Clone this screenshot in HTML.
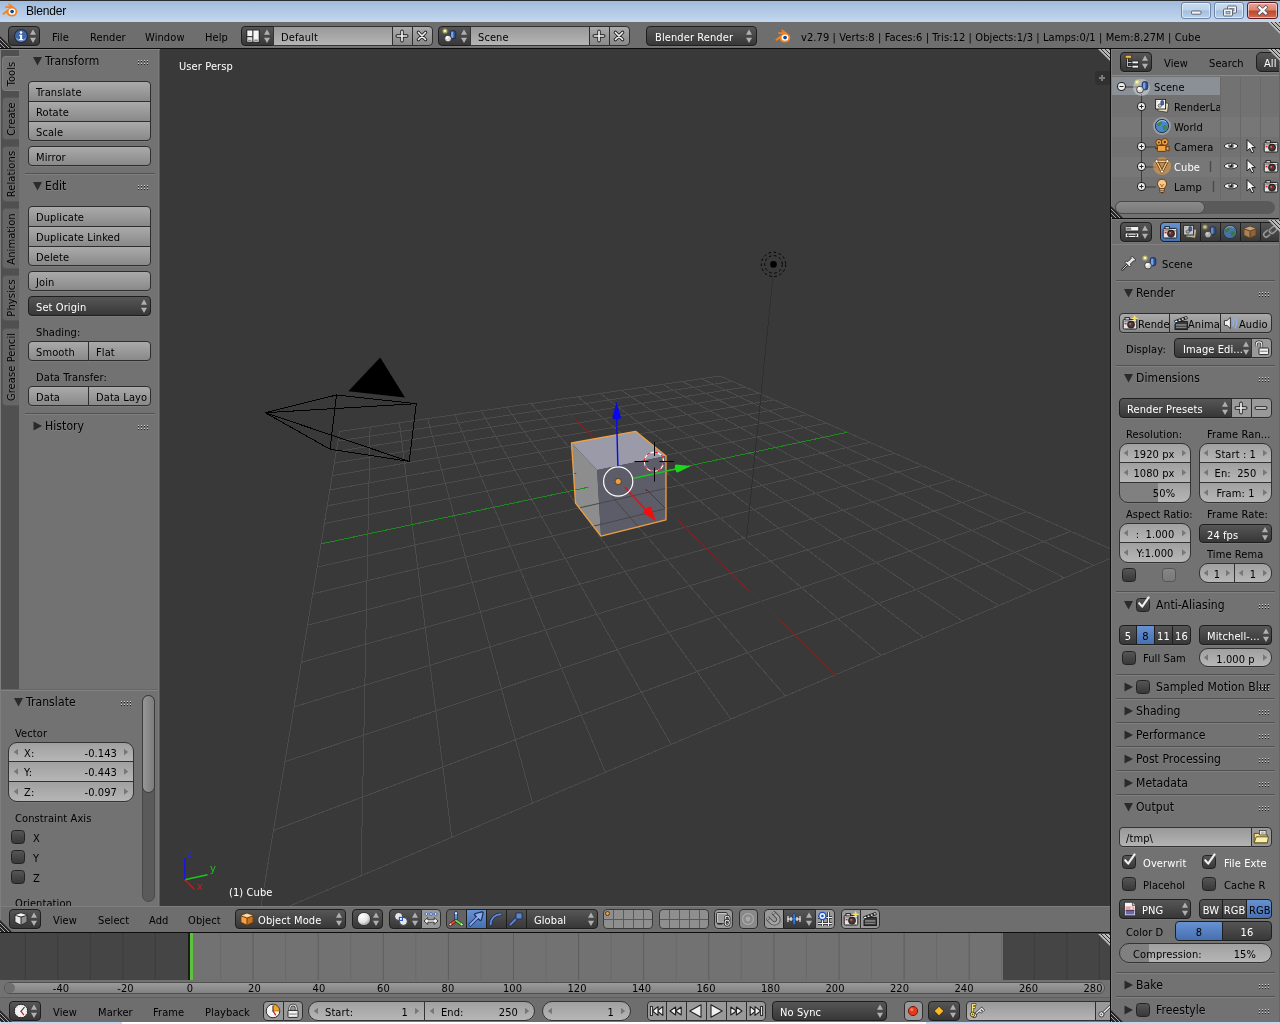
<!DOCTYPE html>
<html><head><meta charset="utf-8"><title>Blender</title>
<style>
html,body{margin:0;padding:0;}
body{width:1280px;height:1024px;overflow:hidden;position:relative;background:#727272;font-family:"DejaVu Sans Condensed","DejaVu Sans","Liberation Sans",sans-serif;font-size:11px;font-stretch:condensed;letter-spacing:0.1px;color:#000;}
div,span,svg{position:absolute;box-sizing:border-box;}
.t{white-space:nowrap;line-height:14px;height:14px;}
.w{overflow:hidden;white-space:nowrap;}
.w>span{top:1px;bottom:-1px;}
.btn{background:linear-gradient(#aaaaaa,#898989);border:1px solid #2e2e2e;color:#000;}
.btn,.menu,.num,.txt,.tog,.togs,.radio,.radios{box-shadow:0 1px 0 rgba(255,255,255,0.07);}
.menu{background:linear-gradient(#565656,#373737);border:1px solid #1e1e1e;color:#fff;}
.num{background:linear-gradient(#a0a0a0,#b6b6b6);border:1px solid #333;color:#000;}
.txt{background:linear-gradient(#999999,#b4b4b4);border:1px solid #333;color:#000;}
.tog{background:#999999;border:1px solid #2e2e2e;color:#000;}
.togs{background:#646464;border:1px solid #2e2e2e;color:#fff;}
.radio{background:linear-gradient(#555555,#383838);border:1px solid #1e1e1e;color:#fff;}
.radios{background:linear-gradient(#6691d3,#4770b1);border:1px solid #1e1e1e;color:#000;}
.chk{background:linear-gradient(#555555,#383838);border:1px solid #222;border-radius:3.5px;width:14px;height:14px;}
.chkd{background:linear-gradient(#868686,#797979);border:1px solid #555;border-radius:3.5px;width:14px;height:14px;}
.sep{height:1px;background:#5c5c5c;border-bottom:0;}
.hdr{background:#6e6e6e;}
.ph{font-size:11px;}
.sh{text-shadow:0 1px 0 rgba(255,255,255,0.12);}
</style></head>
<body>
<div id="root" style="left:0;top:0;width:1280px;height:1024px;will-change:transform;">
<div class="" style="left:0px;top:49px;width:160px;height:857px;background:#727272;"></div>
<div class="" style="left:0px;top:49px;width:19px;height:641px;background:#505050;"></div>
<div class="" style="left:0px;top:49px;width:1px;height:857px;background:#7e7e7e;z-index:3;"></div>
<div class="" style="left:158px;top:49px;width:1px;height:857px;background:#7a7a7a;"></div>
<div class="" style="left:159px;top:49px;width:1px;height:857px;background:#5a5a5a;"></div>
<div class="" style="left:0px;top:49px;width:160px;height:1px;background:#858585;"></div>
<div class="" style="left:2px;top:56px;width:18px;height:35px;background:#727272;border:1px solid #7f7f7f;border-right:0;border-radius:4px 0 0 4px;"></div>
<div class="t sh" style="left:-38px;top:66.5px;width:100px;text-align:center;transform:rotate(-90deg);">Tools</div>
<div class="" style="left:2px;top:97px;width:17px;height:43px;background:#666666;border:1px solid #585858;border-right:0;border-radius:4px 0 0 4px;"></div>
<div class="t sh" style="left:-38px;top:111.5px;width:100px;text-align:center;transform:rotate(-90deg);">Create</div>
<div class="" style="left:2px;top:146px;width:17px;height:56px;background:#666666;border:1px solid #585858;border-right:0;border-radius:4px 0 0 4px;"></div>
<div class="t sh" style="left:-38px;top:167.0px;width:100px;text-align:center;transform:rotate(-90deg);">Relations</div>
<div class="" style="left:2px;top:208px;width:17px;height:61px;background:#666666;border:1px solid #585858;border-right:0;border-radius:4px 0 0 4px;"></div>
<div class="t sh" style="left:-38px;top:231.5px;width:100px;text-align:center;transform:rotate(-90deg);">Animation</div>
<div class="" style="left:2px;top:275px;width:17px;height:46px;background:#666666;border:1px solid #585858;border-right:0;border-radius:4px 0 0 4px;"></div>
<div class="t sh" style="left:-38px;top:291.0px;width:100px;text-align:center;transform:rotate(-90deg);">Physics</div>
<div class="" style="left:2px;top:328px;width:17px;height:78px;background:#666666;border:1px solid #585858;border-right:0;border-radius:4px 0 0 4px;"></div>
<div class="t sh" style="left:-38px;top:360.0px;width:100px;text-align:center;transform:rotate(-90deg);">Grease Pencil</div>
<svg style="left:33px;top:56px" width="10" height="10" viewBox="0 0 10 10"><polygon points="0,1 9,1 4.5,9.5" fill="#2a2a2a"/></svg>
<div class="t sh" style="font-size:12px;left:45px;top:54px;">Transform</div>
<svg style="left:138px;top:60px" width="12" height="6" viewBox="0 0 12 6" shape-rendering="crispEdges"><rect x="0" y="0" width="1" height="1" fill="#d2d2d2"/><rect x="0" y="1" width="1" height="1" fill="#222222"/><rect x="0" y="3" width="1" height="1" fill="#d2d2d2"/><rect x="0" y="4" width="1" height="1" fill="#222222"/><rect x="3" y="0" width="1" height="1" fill="#d2d2d2"/><rect x="3" y="1" width="1" height="1" fill="#222222"/><rect x="3" y="3" width="1" height="1" fill="#d2d2d2"/><rect x="3" y="4" width="1" height="1" fill="#222222"/><rect x="6" y="0" width="1" height="1" fill="#d2d2d2"/><rect x="6" y="1" width="1" height="1" fill="#222222"/><rect x="6" y="3" width="1" height="1" fill="#d2d2d2"/><rect x="6" y="4" width="1" height="1" fill="#222222"/><rect x="9" y="0" width="1" height="1" fill="#d2d2d2"/><rect x="9" y="1" width="1" height="1" fill="#222222"/><rect x="9" y="3" width="1" height="1" fill="#d2d2d2"/><rect x="9" y="4" width="1" height="1" fill="#222222"/></svg>
<div class="w btn" style="left:28px;top:81px;width:123px;height:21px;border-radius:4px 4px 0px 0px;line-height:19px;"><span style="left:7px;">Translate</span></div>
<div class="w btn" style="left:28px;top:101px;width:123px;height:21px;border-radius:0px 0px 0px 0px;line-height:19px;"><span style="left:7px;">Rotate</span></div>
<div class="w btn" style="left:28px;top:121px;width:123px;height:20px;border-radius:0px 0px 4px 4px;line-height:19px;"><span style="left:7px;">Scale</span></div>
<div class="w btn" style="left:28px;top:146px;width:123px;height:20px;border-radius:4px 4px 4px 4px;line-height:19px;"><span style="left:7px;">Mirror</span></div>
<div class="" style="left:25px;top:173px;width:130px;height:1px;background:#525252;"></div>
<div class="" style="left:25px;top:174px;width:130px;height:1px;background:#818181;"></div>
<svg style="left:33px;top:181px" width="10" height="10" viewBox="0 0 10 10"><polygon points="0,1 9,1 4.5,9.5" fill="#2a2a2a"/></svg>
<div class="t sh" style="font-size:12px;left:45px;top:179px;">Edit</div>
<svg style="left:138px;top:185px" width="12" height="6" viewBox="0 0 12 6" shape-rendering="crispEdges"><rect x="0" y="0" width="1" height="1" fill="#d2d2d2"/><rect x="0" y="1" width="1" height="1" fill="#222222"/><rect x="0" y="3" width="1" height="1" fill="#d2d2d2"/><rect x="0" y="4" width="1" height="1" fill="#222222"/><rect x="3" y="0" width="1" height="1" fill="#d2d2d2"/><rect x="3" y="1" width="1" height="1" fill="#222222"/><rect x="3" y="3" width="1" height="1" fill="#d2d2d2"/><rect x="3" y="4" width="1" height="1" fill="#222222"/><rect x="6" y="0" width="1" height="1" fill="#d2d2d2"/><rect x="6" y="1" width="1" height="1" fill="#222222"/><rect x="6" y="3" width="1" height="1" fill="#d2d2d2"/><rect x="6" y="4" width="1" height="1" fill="#222222"/><rect x="9" y="0" width="1" height="1" fill="#d2d2d2"/><rect x="9" y="1" width="1" height="1" fill="#222222"/><rect x="9" y="3" width="1" height="1" fill="#d2d2d2"/><rect x="9" y="4" width="1" height="1" fill="#222222"/></svg>
<div class="w btn" style="left:28px;top:206px;width:123px;height:21px;border-radius:4px 4px 0px 0px;line-height:19px;"><span style="left:7px;">Duplicate</span></div>
<div class="w btn" style="left:28px;top:226px;width:123px;height:21px;border-radius:0px 0px 0px 0px;line-height:19px;"><span style="left:7px;">Duplicate Linked</span></div>
<div class="w btn" style="left:28px;top:246px;width:123px;height:20px;border-radius:0px 0px 4px 4px;line-height:19px;"><span style="left:7px;">Delete</span></div>
<div class="w btn" style="left:28px;top:271px;width:123px;height:20px;border-radius:4px 4px 4px 4px;line-height:19px;"><span style="left:7px;">Join</span></div>
<div class="w menu" style="left:28px;top:296px;width:123px;height:20px;border-radius:4px 4px 4px 4px;line-height:19px;"><span style="left:7px;">Set Origin</span><svg style="left:0;top:0" width="123" height="20" viewBox="0 0 123 20"><polygon points="112,7.8 118,7.8 115,2.5999999999999996" fill="#b0b0b0"/><polygon points="112,10.8 118,10.8 115,16.0" fill="#b0b0b0"/></svg></div>
<div class="t " style="left:36px;top:326px;">Shading:</div>
<div class="w btn" style="left:28px;top:341px;width:61px;height:20px;border-radius:4px 0px 0px 4px;line-height:19px;"><span style="left:7px;">Smooth</span></div>
<div class="w btn" style="left:88px;top:341px;width:63px;height:20px;border-radius:0px 4px 4px 0px;line-height:19px;"><span style="left:7px;">Flat</span></div>
<div class="t " style="left:36px;top:371px;">Data Transfer:</div>
<div class="w btn" style="left:28px;top:386px;width:61px;height:20px;border-radius:4px 0px 0px 4px;line-height:19px;"><span style="left:7px;">Data</span></div>
<div class="w btn" style="left:88px;top:386px;width:63px;height:20px;border-radius:0px 4px 4px 0px;line-height:19px;"><span style="left:7px;">Data Layo</span></div>
<div class="" style="left:25px;top:413px;width:130px;height:1px;background:#525252;"></div>
<div class="" style="left:25px;top:414px;width:130px;height:1px;background:#818181;"></div>
<svg style="left:33px;top:421px" width="10" height="10" viewBox="0 0 10 10"><polygon points="0.5,0.5 0.5,9.5 9,5" fill="#2a2a2a"/></svg>
<div class="t sh" style="font-size:12px;left:45px;top:419px;">History</div>
<svg style="left:138px;top:425px" width="12" height="6" viewBox="0 0 12 6" shape-rendering="crispEdges"><rect x="0" y="0" width="1" height="1" fill="#d2d2d2"/><rect x="0" y="1" width="1" height="1" fill="#222222"/><rect x="0" y="3" width="1" height="1" fill="#d2d2d2"/><rect x="0" y="4" width="1" height="1" fill="#222222"/><rect x="3" y="0" width="1" height="1" fill="#d2d2d2"/><rect x="3" y="1" width="1" height="1" fill="#222222"/><rect x="3" y="3" width="1" height="1" fill="#d2d2d2"/><rect x="3" y="4" width="1" height="1" fill="#222222"/><rect x="6" y="0" width="1" height="1" fill="#d2d2d2"/><rect x="6" y="1" width="1" height="1" fill="#222222"/><rect x="6" y="3" width="1" height="1" fill="#d2d2d2"/><rect x="6" y="4" width="1" height="1" fill="#222222"/><rect x="9" y="0" width="1" height="1" fill="#d2d2d2"/><rect x="9" y="1" width="1" height="1" fill="#222222"/><rect x="9" y="3" width="1" height="1" fill="#d2d2d2"/><rect x="9" y="4" width="1" height="1" fill="#222222"/></svg>
<div class="" style="left:0px;top:689px;width:158px;height:217px;background:#727272;"></div>
<div class="" style="left:0px;top:689px;width:158px;height:1px;background:#666666;"></div>
<div class="" style="left:0px;top:690px;width:158px;height:1px;background:#828282;"></div>
<svg style="left:14px;top:697px" width="10" height="10" viewBox="0 0 10 10"><polygon points="0,1 9,1 4.5,9.5" fill="#2a2a2a"/></svg>
<div class="t sh" style="font-size:12px;left:26px;top:695px;">Translate</div>
<svg style="left:121px;top:701px" width="12" height="6" viewBox="0 0 12 6" shape-rendering="crispEdges"><rect x="0" y="0" width="1" height="1" fill="#d2d2d2"/><rect x="0" y="1" width="1" height="1" fill="#222222"/><rect x="0" y="3" width="1" height="1" fill="#d2d2d2"/><rect x="0" y="4" width="1" height="1" fill="#222222"/><rect x="3" y="0" width="1" height="1" fill="#d2d2d2"/><rect x="3" y="1" width="1" height="1" fill="#222222"/><rect x="3" y="3" width="1" height="1" fill="#d2d2d2"/><rect x="3" y="4" width="1" height="1" fill="#222222"/><rect x="6" y="0" width="1" height="1" fill="#d2d2d2"/><rect x="6" y="1" width="1" height="1" fill="#222222"/><rect x="6" y="3" width="1" height="1" fill="#d2d2d2"/><rect x="6" y="4" width="1" height="1" fill="#222222"/><rect x="9" y="0" width="1" height="1" fill="#d2d2d2"/><rect x="9" y="1" width="1" height="1" fill="#222222"/><rect x="9" y="3" width="1" height="1" fill="#d2d2d2"/><rect x="9" y="4" width="1" height="1" fill="#222222"/></svg>
<div class="t " style="left:15px;top:727px;">Vector</div>
<div class="w num" style="left:8px;top:742px;width:126px;height:20px;border-radius:9px 9px 0px 0px;line-height:19px;"><span style="left:15px;">X:</span><svg style="left:0;top:0" width="126" height="20" viewBox="0 0 126 20"><polygon points="9,5.7 9,12.3 4.8,9.0" fill="#777777"/><polygon points="115,5.7 115,12.3 119.2,9.0" fill="#777777"/></svg><span style="right:16px">-0.143</span></div>
<div class="w num" style="left:8px;top:761px;width:126px;height:21px;border-radius:0px 0px 0px 0px;line-height:19px;"><span style="left:15px;">Y:</span><svg style="left:0;top:0" width="126" height="21" viewBox="0 0 126 21"><polygon points="9,6.2 9,12.8 4.8,9.5" fill="#777777"/><polygon points="115,6.2 115,12.8 119.2,9.5" fill="#777777"/></svg><span style="right:16px">-0.443</span></div>
<div class="w num" style="left:8px;top:781px;width:126px;height:21px;border-radius:0px 0px 9px 9px;line-height:19px;"><span style="left:15px;">Z:</span><svg style="left:0;top:0" width="126" height="21" viewBox="0 0 126 21"><polygon points="9,6.2 9,12.8 4.8,9.5" fill="#777777"/><polygon points="115,6.2 115,12.8 119.2,9.5" fill="#777777"/></svg><span style="right:16px">-0.097</span></div>
<div class="t " style="left:15px;top:812px;">Constraint Axis</div>
<div class="chk" style="left:11px;top:830px;overflow:visible"></div>
<div class="t " style="left:33px;top:832px;">X</div>
<div class="chk" style="left:11px;top:850px;overflow:visible"></div>
<div class="t " style="left:33px;top:852px;">Y</div>
<div class="chk" style="left:11px;top:870px;overflow:visible"></div>
<div class="t " style="left:33px;top:872px;">Z</div>
<div class="t " style="left:15px;top:897px;">Orientation</div>
<div class="" style="left:142px;top:695px;width:13px;height:207px;background:#5a5a5a;border:1px solid #484848;border-radius:6.5px;"></div>
<div class="" style="left:142px;top:695px;width:13px;height:98px;background:linear-gradient(90deg,#969696,#7c7c7c);border:1px solid #3c3c3c;border-radius:6.5px;"></div>
<div class="" style="left:160px;top:49px;width:950px;height:857px;background:#393939;"></div>
<svg style="left:160px;top:49px" width="950" height="857" viewBox="160 49 950 857"><path d="M339.6 431.5L720.1 376.0M339.6 431.5L258.8 919.1M338.0 441.0L732.1 381.4M370.1 427.0L361.0 875.9M336.3 451.5L745.0 387.1M399.4 422.7L451.7 837.4M334.4 463.0L758.9 393.2M427.6 418.6L532.7 803.1M332.3 475.7L773.8 399.8M454.9 414.7L605.4 772.3M329.9 489.9L789.9 406.9M481.2 410.8L671.2 744.4M327.3 505.8L807.4 414.7M506.7 407.1L731.0 719.1M324.3 523.6L826.4 423.1M531.2 403.5L785.4 696.0M317.1 567.1L869.8 442.3M578.0 396.7L881.2 655.5M312.7 593.9L894.9 453.4M600.2 393.5L923.5 637.5M307.5 625.2L922.6 465.7M621.8 390.4L962.6 621.0M301.4 662.3L953.4 479.3M642.7 387.3L998.9 605.6M294.0 706.9L987.9 494.6M662.9 384.4L1032.7 591.3M284.9 761.7L1026.7 511.8M682.6 381.5L1064.3 577.9M273.5 830.4L1070.8 531.4M701.6 378.7L1093.7 565.4M258.8 919.1L1121.3 553.7M720.1 376.0L1121.3 553.7" stroke="#4b4b4b" stroke-width="1" fill="none" shape-rendering="crispEdges"/><path d="M555.0 400.1L835.3 674.9" stroke="#7a2323" stroke-width="1" shape-rendering="crispEdges"/><path d="M321.0 543.9L847.1 432.3" stroke="#1f8a1f" stroke-width="1" shape-rendering="crispEdges"/><path d="M773 276L746.5 539" stroke="#2f2f2f" stroke-width="1" shape-rendering="crispEdges"/><circle cx="773.5" cy="264.4" r="3.3" fill="#000"/><circle cx="773.5" cy="264.4" r="8.8" fill="none" stroke="#000" stroke-width="1" stroke-dasharray="2.6 2.6"/><circle cx="773.5" cy="264.4" r="12.2" fill="none" stroke="#000" stroke-width="1" stroke-dasharray="2.6 2.6"/><path d="M265.2 412.7L336.5 395L416.3 403.7L409.2 461.4L330 449.2Z M336.5 395L330 449.2 M265.2 412.7L416.3 403.7 M265.2 412.7L409.2 461.4 M265.2 412.7L330 449.2" stroke="#000" stroke-width="1" fill="none" stroke-linejoin="round" shape-rendering="crispEdges"/><path d="M380.2 357.4L348.3 391.3L405 397.4Z" fill="#000"/><polygon points="571.5,443 635.6,431.3 666,456 597.1,470" fill="#9a9aa8"/><polygon points="571.5,443 597.1,470 601,536.1 575.5,503" fill="#8d8d8d"/><polygon points="597.1,470 666,456 666,519.8 601,536.1" fill="#5d5d69"/><clipPath id="cubelow"><polygon points="573.3,470 598.9,499.7 666,484.7 666,519.8 601,536.1 575.5,503"/></clipPath><g clip-path="url(#cubelow)"><path d="M339.6 431.5L720.1 376.0M339.6 431.5L258.8 919.1M338.0 441.0L732.1 381.4M370.1 427.0L361.0 875.9M336.3 451.5L745.0 387.1M399.4 422.7L451.7 837.4M334.4 463.0L758.9 393.2M427.6 418.6L532.7 803.1M332.3 475.7L773.8 399.8M454.9 414.7L605.4 772.3M329.9 489.9L789.9 406.9M481.2 410.8L671.2 744.4M327.3 505.8L807.4 414.7M506.7 407.1L731.0 719.1M324.3 523.6L826.4 423.1M531.2 403.5L785.4 696.0M317.1 567.1L869.8 442.3M578.0 396.7L881.2 655.5M312.7 593.9L894.9 453.4M600.2 393.5L923.5 637.5M307.5 625.2L922.6 465.7M621.8 390.4L962.6 621.0M301.4 662.3L953.4 479.3M642.7 387.3L998.9 605.6M294.0 706.9L987.9 494.6M662.9 384.4L1032.7 591.3M284.9 761.7L1026.7 511.8M682.6 381.5L1064.3 577.9M273.5 830.4L1070.8 531.4M701.6 378.7L1093.7 565.4M258.8 919.1L1121.3 553.7M720.1 376.0L1121.3 553.7" stroke="#474749" stroke-width="1" fill="none"/><path d="M555.0 400.1L835.3 674.9" stroke="#7a2323" stroke-width="1" shape-rendering="crispEdges"/><path d="M321.0 543.9L847.1 432.3" stroke="#1f8a1f" stroke-width="1" shape-rendering="crispEdges"/></g><polygon points="571.5,443 635.6,431.3 666,456 666,519.8 601,536.1 575.5,503" fill="none" stroke="#f0a040" stroke-width="1.3" stroke-linejoin="round"/><path d="M617.9 467L616.6 418" stroke="#0a0aee" stroke-width="1.4"/><path d="M616.5 401.5C618.3 408 619.6 413 621 417.5C621.4 420 612 420 612.3 417.5C613.8 413 615 408 616.5 401.5Z" fill="#0808ee"/><path d="M632.6 478.5L676 469" stroke="#18c818" stroke-width="1.4"/><path d="M691 466L676 464.4C673.8 464.6 675.4 473 677.6 472.6Z" fill="#18d818"/><path d="M624.7 487L645 509" stroke="#e01010" stroke-width="1.4"/><path d="M655.8 521L651 507C649.6 505 641.6 511.4 643.6 513.2Z" fill="#ee1010"/><circle cx="618.2" cy="481.5" r="14.6" fill="none" stroke="#ffffff" stroke-width="1.2"/><circle cx="618.2" cy="481.5" r="3.1" fill="#f0a040" stroke="#3a2a10" stroke-width="0.7"/><circle cx="654" cy="461.8" r="9.7" fill="none" stroke="#ffffff" stroke-width="1.1"/><circle cx="654" cy="461.8" r="9.7" fill="none" stroke="#e01818" stroke-width="1.1" stroke-dasharray="3.8 3.8"/><path d="M634.5 461.5H648.5M659.5 461.5H674M654.5 442V456M654.5 467.5V481.5" stroke="#000" stroke-width="1"/><path d="M184.8 879.7L194.6 889.5" stroke="#c81818" stroke-width="1.5"/><path d="M184.8 879.7L207.5 874.8" stroke="#18c818" stroke-width="1.5"/><path d="M184.8 879.7L184.8 858.2" stroke="#1818e0" stroke-width="1.5"/></svg>
<div class="t " style="color:#c02020;left:197px;top:880px;">x</div>
<div class="t " style="color:#20c020;left:210px;top:862px;">y</div>
<div class="t " style="color:#2828e0;left:187px;top:847px;">z</div>
<div class="t " style="color:#fff;left:179px;top:60px;">User Persp</div>
<div class="t " style="color:#fff;left:229px;top:886px;">(1) Cube</div>
<div class="" style="left:1095px;top:71px;width:15px;height:14px;background:#303030;border-radius:4px 0 0 4px;"></div>
<svg style="left:1097px;top:73px" width="10" height="10" viewBox="0 0 10 10"><path d="M5 2V8M2 5H8" stroke="#7c7c7c" stroke-width="2"/></svg>
<div style="left:1098px;top:49px;width:12px;height:12px;clip-path:polygon(0 0,100% 0,100% 100%);background:repeating-linear-gradient(225deg,#2e2e2e 0,#2e2e2e 1.41px,#b8b8b8 1.41px,#b8b8b8 2.83px);z-index:6;"></div>
<div class="" style="left:1110px;top:49px;width:1px;height:973px;background:#0c0c0c;z-index:5;"></div>
<div class="" style="left:1111px;top:49px;width:1px;height:973px;background:#7e7e7e;z-index:5;"></div>
<div class="hdr" style="left:0px;top:906px;width:1112px;height:27px;"></div>
<div class="" style="left:0px;top:906px;width:1110px;height:1px;background:#7e7e7e;"></div>
<div class="" style="left:0px;top:906px;width:1px;height:14px;background:#7e7e7e;"></div>
<div class="" style="left:0px;top:932px;width:1112px;height:2px;background:#0c0c0c;"></div>
<div style="left:0px;top:920px;width:12px;height:12px;clip-path:polygon(0 0,100% 100%,0 100%);background:repeating-linear-gradient(45deg,#a8a8a8 0,#a8a8a8 1.41px,#262626 1.41px,#262626 2.83px);z-index:6;"></div>
<div class="w menu" style="left:9px;top:909px;width:32px;height:20px;border-radius:4px 4px 4px 4px;line-height:19px;"><svg style="left:0;top:0" width="32" height="20" viewBox="0 0 32 20"><polygon points="21,7.8 27,7.8 24,2.5999999999999996" fill="#b0b0b0"/><polygon points="21,10.8 27,10.8 24,16.0" fill="#b0b0b0"/></svg></div>
<svg style="left:13px;top:911px;" width="16" height="16" viewBox="0 0 16 16"><path d="M1.5 3.2L8 1.4L14.5 3.2V11.2L8 14.6L1.5 11.2Z" fill="#2a2a2a"/><path d="M2.4 3.9L8 2.3L13.6 3.9L8 5.6Z" fill="#fafafa"/><path d="M2.4 4.8L7.5 6.4V13.4L2.4 10.7Z" fill="#e9e9e9"/><path d="M8.5 6.4L13.6 4.8V10.7L8.5 13.4Z" fill="#8e8e8e"/></svg>
<div class="t " style="left:53px;top:914px;">View</div>
<div class="t " style="left:98px;top:914px;">Select</div>
<div class="t " style="left:149px;top:914px;">Add</div>
<div class="t " style="left:188px;top:914px;">Object</div>
<div class="w menu" style="left:235px;top:909px;width:111px;height:20px;border-radius:4px 4px 4px 4px;line-height:19px;"><span style="left:22px;">Object Mode</span><svg style="left:0;top:0" width="111" height="20" viewBox="0 0 111 20"><polygon points="100,7.8 106,7.8 103,2.5999999999999996" fill="#b0b0b0"/><polygon points="100,10.8 106,10.8 103,16.0" fill="#b0b0b0"/></svg></div>
<svg style="left:239px;top:911px;" width="16" height="16" viewBox="0 0 16 16"><path d="M1.5 4L8 1.6L14.5 4V11.6L8 14.6L1.5 11.6Z" fill="#6b3c0c"/><path d="M2.5 4.4L8 2.5L13.5 4.4L8 6.4Z" fill="#fbd9a5"/><path d="M2.4 5.4L7.5 7.2V13.4L2.4 11Z" fill="#f2a24a"/><path d="M8.5 7.2L13.6 5.4V11L8.5 13.4Z" fill="#c8741c"/></svg>
<div class="w menu" style="left:352px;top:909px;width:31px;height:20px;border-radius:4px 4px 4px 4px;line-height:19px;"><svg style="left:0;top:0" width="31" height="20" viewBox="0 0 31 20"><polygon points="20,7.8 26,7.8 23,2.5999999999999996" fill="#b0b0b0"/><polygon points="20,10.8 26,10.8 23,16.0" fill="#b0b0b0"/></svg></div>
<svg style="left:356px;top:911px;" width="16" height="16" viewBox="0 0 16 16"><defs><radialGradient id="gs" cx="0.35" cy="0.3" r="0.8"><stop offset="0" stop-color="#fff"/><stop offset="0.55" stop-color="#e4e4e4"/><stop offset="1" stop-color="#8a8a8a"/></radialGradient></defs><circle cx="8" cy="8" r="6.6" fill="url(#gs)" stroke="#262626" stroke-width="0.8"/></svg>
<div class="w menu" style="left:389px;top:909px;width:33px;height:20px;border-radius:4px 0px 0px 4px;line-height:19px;"><svg style="left:0;top:0" width="33" height="20" viewBox="0 0 33 20"><polygon points="22,7.8 28,7.8 25,2.5999999999999996" fill="#b0b0b0"/><polygon points="22,10.8 28,10.8 25,16.0" fill="#b0b0b0"/></svg></div>
<svg style="left:393px;top:911px;" width="16" height="16" viewBox="0 0 16 16"><circle cx="5.6" cy="5.4" r="4" fill="#e6e6e6" stroke="#262626" stroke-width="0.8"/><circle cx="10.4" cy="10.4" r="4" fill="#e6e6e6" stroke="#262626" stroke-width="0.8"/><rect x="6.4" y="6.4" width="3" height="3" fill="#fff" stroke="#1a56d0" stroke-width="1.1"/></svg>
<div class="w tog" style="left:421px;top:909px;width:20px;height:20px;border-radius:0px 4px 4px 0px;line-height:19px;"></div>
<svg style="left:423px;top:911px;" width="16" height="16" viewBox="0 0 16 16"><circle cx="3.4" cy="3" r="1.4" fill="#f4f4f4" stroke="#2c5fc0" stroke-width="0.9"/><circle cx="8" cy="3" r="1.4" fill="#f4f4f4" stroke="#2c5fc0" stroke-width="0.9"/><circle cx="12.6" cy="3" r="1.4" fill="#f4f4f4" stroke="#2c5fc0" stroke-width="0.9"/><path d="M1 10L4.8 6.6V8.8H11.2V6.6L15 10L11.2 13.4V11.2H4.8V13.4Z" fill="#f6f6f6" stroke="#2a2a2a" stroke-width="0.9" stroke-linejoin="round"/></svg>
<div class="w togs" style="left:446px;top:909px;width:21px;height:20px;border-radius:4px 0px 0px 4px;line-height:19px;"></div>
<svg style="left:448px;top:911px;" width="16" height="16" viewBox="0 0 16 16"><path d="M8 9.5V1.8" stroke="#1a2a66" stroke-width="3.2" stroke-linecap="round"/><path d="M8 9.5V1.8" stroke="#6f9bf0" stroke-width="1.8" stroke-linecap="round"/><path d="M8 9.5L2.2 13.6" stroke="#5a1414" stroke-width="3.2" stroke-linecap="round"/><path d="M8 9.5L2.2 13.6" stroke="#f04a3a" stroke-width="1.8" stroke-linecap="round"/><path d="M8 9.5L13.8 13.6" stroke="#1c4a14" stroke-width="3.2" stroke-linecap="round"/><path d="M8 9.5L13.8 13.6" stroke="#72d84a" stroke-width="1.8" stroke-linecap="round"/><circle cx="8" cy="2.2" r="1" fill="#fff"/><circle cx="2.4" cy="13.4" r="0.9" fill="#fdd"/><circle cx="13.6" cy="13.4" r="0.9" fill="#dfd"/></svg>
<div class="w radios" style="left:466px;top:909px;width:21px;height:20px;border-radius:0px 0px 0px 0px;line-height:19px;"></div>
<svg style="left:468px;top:911px;" width="16" height="16" viewBox="0 0 16 16"><path d="M2.2 13.8L10 6L7.6 3.6L14 2L12.4 8.4L10 6" fill="none" stroke="#1c2f5c" stroke-width="3.4" stroke-linejoin="round" stroke-linecap="round"/><path d="M2.2 13.8L10 6" stroke="#86aef0" stroke-width="1.9" stroke-linecap="round"/><path d="M7.6 3.6L14 2L12.4 8.4Z" fill="#86aef0" stroke="#86aef0" stroke-width="1" stroke-linejoin="round"/></svg>
<div class="w radio" style="left:486px;top:909px;width:21px;height:20px;border-radius:0px 0px 0px 0px;line-height:19px;"></div>
<svg style="left:488px;top:911px;" width="16" height="16" viewBox="0 0 16 16"><path d="M2.6 13.2C3 7.6 6.6 3.6 12.6 3.2" fill="none" stroke="#1c2f5c" stroke-width="3.6" stroke-linecap="round"/><path d="M2.6 13.2C3 7.6 6.6 3.6 12.6 3.2" fill="none" stroke="#5f86c8" stroke-width="2" stroke-linecap="round"/></svg>
<div class="w radio" style="left:506px;top:909px;width:21px;height:20px;border-radius:0px 0px 0px 0px;line-height:19px;"></div>
<svg style="left:508px;top:911px;" width="16" height="16" viewBox="0 0 16 16"><path d="M2.4 13.6L9 7" stroke="#1c2f5c" stroke-width="3.4" stroke-linecap="round"/><path d="M2.4 13.6L9 7" stroke="#5f86c8" stroke-width="1.9" stroke-linecap="round"/><rect x="8" y="2" width="6" height="6" fill="#5f86c8" stroke="#1c2f5c" stroke-width="0.9"/></svg>
<div class="w menu" style="left:526px;top:909px;width:72px;height:20px;border-radius:0px 4px 4px 0px;line-height:19px;"><span style="left:7px;">Global</span><svg style="left:0;top:0" width="72" height="20" viewBox="0 0 72 20"><polygon points="61,7.8 67,7.8 64,2.5999999999999996" fill="#b0b0b0"/><polygon points="61,10.8 67,10.8 64,16.0" fill="#b0b0b0"/></svg></div>
<div class="" style="left:603px;top:909px;width:50px;height:20px;background:#8f8f8f;border:1px solid #3a3a3a;border-radius:4px;"></div>
<div class="" style="left:612.5px;top:910px;width:1px;height:18px;background:#5a5a5a;"></div>
<div class="" style="left:622.5px;top:910px;width:1px;height:18px;background:#5a5a5a;"></div>
<div class="" style="left:632.5px;top:910px;width:1px;height:18px;background:#5a5a5a;"></div>
<div class="" style="left:642.5px;top:910px;width:1px;height:18px;background:#5a5a5a;"></div>
<div class="" style="left:604px;top:918.5px;width:48px;height:1px;background:#5a5a5a;"></div>
<div class="" style="left:659px;top:909px;width:50px;height:20px;background:#8f8f8f;border:1px solid #3a3a3a;border-radius:4px;"></div>
<div class="" style="left:668.5px;top:910px;width:1px;height:18px;background:#5a5a5a;"></div>
<div class="" style="left:678.5px;top:910px;width:1px;height:18px;background:#5a5a5a;"></div>
<div class="" style="left:688.5px;top:910px;width:1px;height:18px;background:#5a5a5a;"></div>
<div class="" style="left:698.5px;top:910px;width:1px;height:18px;background:#5a5a5a;"></div>
<div class="" style="left:660px;top:918.5px;width:48px;height:1px;background:#5a5a5a;"></div>
<div class="" style="left:605px;top:911px;width:5px;height:5px;background:#f0a040;border:1px solid #5a3a10;border-radius:3px;"></div>
<div class="w tog" style="left:714px;top:909px;width:19px;height:20px;border-radius:4px 4px 4px 4px;line-height:19px;"></div>
<svg style="left:715px;top:911px;" width="16" height="16" viewBox="0 0 16 16"><rect x="1.6" y="1.6" width="10.6" height="10.6" rx="1" fill="#d8d8d8" stroke="#2a2a2a" stroke-width="1"/><rect x="3" y="3" width="7.8" height="7.8" fill="#9c9c9c"/><rect x="2.4" y="12" width="5" height="1.6" fill="#2a2a2a"/><rect x="10.2" y="5.2" width="4" height="5" rx="1.8" fill="none" stroke="#1e1e1e" stroke-width="2.4"/><rect x="10.2" y="5.2" width="4" height="5" rx="1.8" fill="none" stroke="#f2f2f2" stroke-width="1.1"/><rect x="10.2" y="9.2" width="4" height="5" rx="1.8" fill="none" stroke="#1e1e1e" stroke-width="2.4"/><rect x="10.2" y="9.2" width="4" height="5" rx="1.8" fill="none" stroke="#f2f2f2" stroke-width="1.1"/></svg>
<div class="w tog" style="left:739px;top:909px;width:19px;height:20px;border-radius:4px 4px 4px 4px;line-height:19px;background:#8a8a8a;"></div>
<svg style="left:740px;top:911px;" width="16" height="16" viewBox="0 0 16 16"><circle cx="8" cy="8" r="5.6" fill="none" stroke="#a8a8a8" stroke-width="1.6"/><circle cx="8" cy="8" r="2.4" fill="#a8a8a8"/><circle cx="8" cy="8" r="6.6" fill="none" stroke="#7a7a7a" stroke-width="0.5"/></svg>
<div class="w tog" style="left:764px;top:909px;width:20px;height:20px;border-radius:4px 0px 0px 4px;line-height:19px;"></div>
<svg style="left:766px;top:911px;" width="16" height="16" viewBox="0 0 16 16"><g transform="rotate(-45 8 8)"><path d="M4 2.4V8.6A4 4 0 0 0 12 8.6V2.4" fill="none" stroke="#4a4a4a" stroke-width="4.4"/><path d="M4 2.6V8.6A4 4 0 0 0 12 8.6V2.6" fill="none" stroke="#a6a6a6" stroke-width="2.6"/><path d="M2.3 4.6H5.7M10.3 4.6H13.7" stroke="#4a4a4a" stroke-width="0.8"/></g></svg>
<div class="w menu" style="left:783px;top:909px;width:33px;height:20px;border-radius:0px 0px 0px 0px;line-height:19px;"><svg style="left:0;top:0" width="33" height="20" viewBox="0 0 33 20"><polygon points="22,7.8 28,7.8 25,2.5999999999999996" fill="#b0b0b0"/><polygon points="22,10.8 28,10.8 25,16.0" fill="#b0b0b0"/></svg></div>
<svg style="left:786px;top:911px;" width="16" height="16" viewBox="0 0 16 16"><path d="M1.4 8H14.6" stroke="#e8e8e8" stroke-width="1.2"/><path d="M2 5V11M5 6V10M11 6V10M14 5V11" stroke="#e8e8e8" stroke-width="1.2"/><rect x="6.9" y="2.6" width="2.4" height="10.8" rx="1" fill="#3b82f0" stroke="#0c2a66" stroke-width="0.6"/></svg>
<div class="w tog" style="left:815px;top:909px;width:20px;height:20px;border-radius:0px 4px 4px 0px;line-height:19px;"></div>
<svg style="left:817px;top:911px;" width="16" height="16" viewBox="0 0 16 16"><path d="M5.5 1V15M11.5 1V15M1 6.5H15M1 12.5H15" stroke="#1e1e1e" stroke-width="2.6"/><path d="M5.5 1V15M11.5 1V15M1 6.5H15M1 12.5H15" stroke="#f4f4f4" stroke-width="1.2"/><circle cx="5.4" cy="5" r="3.6" fill="#e8f0ff" stroke="#1a4fc8" stroke-width="1.4"/><circle cx="5.4" cy="5" r="1.3" fill="#1a4fc8"/></svg>
<div class="w tog" style="left:841px;top:909px;width:20px;height:20px;border-radius:4px 0px 0px 4px;line-height:19px;"></div>
<svg style="left:843px;top:911px;" width="16" height="16" viewBox="0 0 16 16"><rect x="1.2" y="4.4" width="13.6" height="9.6" rx="1.2" fill="#e4e4e4" stroke="#1e1e1e" stroke-width="1"/><rect x="3" y="2.6" width="4.4" height="2.4" fill="#d0d0d0" stroke="#1e1e1e" stroke-width="0.9"/><rect x="2" y="6.2" width="12" height="1.2" fill="#8a8a8a"/><circle cx="9" cy="9.6" r="3.5" fill="#3a3a3a" stroke="#111" stroke-width="0.8"/><circle cx="9" cy="9.6" r="2" fill="#7a2a2a"/><circle cx="8.2" cy="8.8" r="0.9" fill="#d08080"/><rect x="2.6" y="8" width="2" height="1.4" fill="#e02020"/><path d="M12.6 0.4L13.5 2.7L15.8 3.4L13.5 4.3L12.6 6.6L11.7 4.3L9.4 3.4L11.7 2.7Z" fill="#ffe23a" stroke="#fff8c0" stroke-width="0.4"/></svg>
<div class="w tog" style="left:860px;top:909px;width:20px;height:20px;border-radius:0px 4px 4px 0px;line-height:19px;"></div>
<svg style="left:862px;top:911px;" width="16" height="16" viewBox="0 0 16 16"><rect x="2" y="6.6" width="12.4" height="8" fill="#3a3a3a" stroke="#161616" stroke-width="0.9"/><rect x="3" y="9.4" width="10.4" height="1.1" fill="#aaa"/><rect x="3" y="11.8" width="10.4" height="1.1" fill="#888"/><path d="M1.4 5.8L13.6 1.4L14.4 3.6L2.2 8Z" fill="#f4f4f4" stroke="#161616" stroke-width="0.9" stroke-linejoin="round"/><path d="M4.2 4.8L5.6 6.6M7.4 3.6L8.8 5.4M10.6 2.5L12 4.3" stroke="#161616" stroke-width="1.4"/><path d="M1.6 6.2L2.4 8.6L0.6 9.2Z" fill="#5aa0f0"/></svg>
<div class="" style="left:0px;top:933px;width:1112px;height:47px;background:#454545;"></div>
<div class="" style="left:190px;top:933px;width:813px;height:47px;background:#727272;"></div>
<svg style="left:0;top:933px" width="1110" height="47" viewBox="0 0 1110 47"><rect x="24.8" y="0" width="1" height="48" fill="#3c3c3c"/><rect x="57.3" y="0" width="1" height="48" fill="#3c3c3c"/><rect x="89.9" y="0" width="1" height="48" fill="#3c3c3c"/><rect x="122.4" y="0" width="1" height="48" fill="#3c3c3c"/><rect x="154.9" y="0" width="1" height="48" fill="#3c3c3c"/><rect x="220.1" y="0" width="1" height="48" fill="#6a6a6a"/><rect x="252.6" y="0" width="1" height="48" fill="#5e5e5e"/><rect x="285.1" y="0" width="1" height="48" fill="#6a6a6a"/><rect x="317.7" y="0" width="1" height="48" fill="#5e5e5e"/><rect x="350.2" y="0" width="1" height="48" fill="#6a6a6a"/><rect x="382.8" y="0" width="1" height="48" fill="#5e5e5e"/><rect x="415.3" y="0" width="1" height="48" fill="#6a6a6a"/><rect x="447.9" y="0" width="1" height="48" fill="#5e5e5e"/><rect x="480.4" y="0" width="1" height="48" fill="#6a6a6a"/><rect x="513.0" y="0" width="1" height="48" fill="#5e5e5e"/><rect x="545.5" y="0" width="1" height="48" fill="#6a6a6a"/><rect x="578.1" y="0" width="1" height="48" fill="#5e5e5e"/><rect x="610.6" y="0" width="1" height="48" fill="#6a6a6a"/><rect x="643.2" y="0" width="1" height="48" fill="#5e5e5e"/><rect x="675.8" y="0" width="1" height="48" fill="#6a6a6a"/><rect x="708.3" y="0" width="1" height="48" fill="#5e5e5e"/><rect x="740.8" y="0" width="1" height="48" fill="#6a6a6a"/><rect x="773.4" y="0" width="1" height="48" fill="#5e5e5e"/><rect x="805.9" y="0" width="1" height="48" fill="#6a6a6a"/><rect x="838.5" y="0" width="1" height="48" fill="#5e5e5e"/><rect x="871.0" y="0" width="1" height="48" fill="#6a6a6a"/><rect x="903.6" y="0" width="1" height="48" fill="#5e5e5e"/><rect x="936.1" y="0" width="1" height="48" fill="#6a6a6a"/><rect x="968.7" y="0" width="1" height="48" fill="#5e5e5e"/><rect x="1001.2" y="0" width="1" height="48" fill="#6a6a6a"/><rect x="1033.8" y="0" width="1" height="48" fill="#3c3c3c"/><rect x="1066.3" y="0" width="1" height="48" fill="#3c3c3c"/><rect x="1098.9" y="0" width="1" height="48" fill="#3c3c3c"/><rect x="188" y="0" width="2" height="48" fill="#1c1c1c"/><rect x="190" y="0" width="3" height="48" fill="#5ec23c"/></svg>
<div class="" style="left:0px;top:980px;width:1112px;height:18px;background:#727272;"></div>
<div class="" style="left:4px;top:982px;width:1101px;height:12px;background:linear-gradient(#9a9a9a,#828282);border:1px solid #505050;border-radius:6px;"></div>
<div class="" style="left:5px;top:983px;width:10px;height:10px;background:#6e6e6e;border-radius:5px;"></div>
<div class="t" style="left:31.0px;width:60px;text-align:center;top:982px;">-40</div>
<div class="t" style="left:95.5px;width:60px;text-align:center;top:982px;">-20</div>
<div class="t" style="left:160.0px;width:60px;text-align:center;top:982px;">0</div>
<div class="t" style="left:224.5px;width:60px;text-align:center;top:982px;">20</div>
<div class="t" style="left:289.0px;width:60px;text-align:center;top:982px;">40</div>
<div class="t" style="left:353.5px;width:60px;text-align:center;top:982px;">60</div>
<div class="t" style="left:418.0px;width:60px;text-align:center;top:982px;">80</div>
<div class="t" style="left:482.5px;width:60px;text-align:center;top:982px;">100</div>
<div class="t" style="left:547.0px;width:60px;text-align:center;top:982px;">120</div>
<div class="t" style="left:611.5px;width:60px;text-align:center;top:982px;">140</div>
<div class="t" style="left:676.0px;width:60px;text-align:center;top:982px;">160</div>
<div class="t" style="left:740.5px;width:60px;text-align:center;top:982px;">180</div>
<div class="t" style="left:805.0px;width:60px;text-align:center;top:982px;">200</div>
<div class="t" style="left:869.5px;width:60px;text-align:center;top:982px;">220</div>
<div class="t" style="left:934.0px;width:60px;text-align:center;top:982px;">240</div>
<div class="t" style="left:998.5px;width:60px;text-align:center;top:982px;">260</div>
<div class="t" style="left:1063.0px;width:60px;text-align:center;top:982px;">280</div>
<div style="left:1098px;top:934px;width:12px;height:12px;clip-path:polygon(0 0,100% 0,100% 100%);background:repeating-linear-gradient(225deg,#2e2e2e 0,#2e2e2e 1.41px,#b8b8b8 1.41px,#b8b8b8 2.83px);z-index:6;"></div>
<div class="hdr" style="left:0px;top:998px;width:1112px;height:24px;"></div>
<div class="" style="left:0px;top:997px;width:1112px;height:1px;background:#5f5f5f;"></div>
<div style="left:0px;top:1010px;width:12px;height:12px;clip-path:polygon(0 0,100% 100%,0 100%);background:repeating-linear-gradient(45deg,#a8a8a8 0,#a8a8a8 1.41px,#262626 1.41px,#262626 2.83px);z-index:6;"></div>
<div class="w menu" style="left:9px;top:1001px;width:32px;height:20px;border-radius:4px 4px 4px 4px;line-height:19px;"><svg style="left:0;top:0" width="32" height="20" viewBox="0 0 32 20"><polygon points="21,7.8 27,7.8 24,2.5999999999999996" fill="#b0b0b0"/><polygon points="21,10.8 27,10.8 24,16.0" fill="#b0b0b0"/></svg></div>
<svg style="left:13px;top:1003px;" width="16" height="16" viewBox="0 0 16 16"><circle cx="8" cy="8" r="6.8" fill="#f4f4f4" stroke="#2a2a2a" stroke-width="1"/><circle cx="8" cy="8" r="5.4" fill="none" stroke="#c8c8c8" stroke-width="1.2" stroke-dasharray="1 1.83"/><path d="M8 8.4L11.2 4.4" stroke="#444" stroke-width="1.2" stroke-linecap="round"/><path d="M8 8.4L10.6 11.6" stroke="#e01818" stroke-width="1.3" stroke-linecap="round"/></svg>
<div class="t " style="left:53px;top:1006px;">View</div>
<div class="t " style="left:98px;top:1006px;">Marker</div>
<div class="t " style="left:153px;top:1006px;">Frame</div>
<div class="t " style="left:205px;top:1006px;">Playback</div>
<div class="w tog" style="left:263px;top:1001px;width:21px;height:20px;border-radius:4px 0px 0px 4px;line-height:19px;"></div>
<svg style="left:265px;top:1003px;" width="16" height="16" viewBox="0 0 16 16"><circle cx="8" cy="8" r="6.8" fill="#f4f4f4" stroke="#2a2a2a" stroke-width="1"/><path d="M8 8V1.6A6.4 6.4 0 0 1 14.4 8Z" fill="#f5a623" stroke="#8a5a10" stroke-width="0.6"/><path d="M8 8L10.6 11.8" stroke="#e01818" stroke-width="1.3" stroke-linecap="round"/><path d="M8 8V3.4" stroke="#444" stroke-width="1" stroke-linecap="round"/></svg>
<div class="w tog" style="left:283px;top:1001px;width:20px;height:20px;border-radius:0px 4px 4px 0px;line-height:19px;"></div>
<svg style="left:285px;top:1003px;" width="16" height="16" viewBox="0 0 16 16"><path d="M4.8 8V5.2A3.2 3.2 0 0 1 11.2 5.2V8" fill="none" stroke="#2a2a2a" stroke-width="2.6"/><path d="M4.8 8V5.2A3.2 3.2 0 0 1 11.2 5.2V8" fill="none" stroke="#f0f0f0" stroke-width="1.2"/><rect x="3" y="7.4" width="10" height="7" rx="0.8" fill="#f0f0f0" stroke="#2a2a2a" stroke-width="1"/><rect x="4.2" y="10.4" width="7.6" height="1.4" fill="#9a9a9a"/></svg>
<div class="w num" style="left:308px;top:1001px;width:117px;height:20px;border-radius:10px 0px 0px 10px;line-height:19px;"><span style="left:16px;">Start:</span><svg style="left:0;top:0" width="117" height="20" viewBox="0 0 117 20"><polygon points="9,5.7 9,12.3 4.8,9.0" fill="#777777"/><polygon points="106,5.7 106,12.3 110.2,9.0" fill="#777777"/></svg><span style="right:16px">1</span></div>
<div class="w num" style="left:424px;top:1001px;width:111px;height:20px;border-radius:0px 10px 10px 0px;line-height:19px;"><span style="left:16px;">End:</span><svg style="left:0;top:0" width="111" height="20" viewBox="0 0 111 20"><polygon points="9,5.7 9,12.3 4.8,9.0" fill="#777777"/><polygon points="100,5.7 100,12.3 104.2,9.0" fill="#777777"/></svg><span style="right:16px">250</span></div>
<div class="w num" style="left:542px;top:1001px;width:89px;height:20px;border-radius:10px 10px 10px 10px;line-height:19px;"><svg style="left:0;top:0" width="89" height="20" viewBox="0 0 89 20"><polygon points="9,5.7 9,12.3 4.8,9.0" fill="#777777"/><polygon points="78,5.7 78,12.3 82.2,9.0" fill="#777777"/></svg><span style="right:16px">1</span></div>
<div class="w tog" style="left:647px;top:1001px;width:20px;height:20px;border-radius:4px 0px 0px 4px;line-height:19px;"></div>
<svg style="left:649px;top:1003px;" width="16" height="16" viewBox="0 0 16 16"><polygon points="8.2,8 13.8,3.6 13.8,12.4" fill="#f0f0f0" stroke="#1e1e1e" stroke-width="1.1" stroke-linejoin="round"/><polygon points="3.4,8 9,3.6 9,12.4" fill="#f0f0f0" stroke="#1e1e1e" stroke-width="1.1" stroke-linejoin="round"/><rect x="1.4" y="3.4" width="2" height="9.2" fill="#e8e8e8" stroke="#1e1e1e" stroke-width="0.9"/></svg>
<div class="w tog" style="left:666px;top:1001px;width:21px;height:20px;border-radius:0px 0px 0px 0px;line-height:19px;"></div>
<svg style="left:668px;top:1003px;" width="16" height="16" viewBox="0 0 16 16"><polygon points="7.6,8 13.2,4 13.2,12" fill="#f0f0f0" stroke="#1e1e1e" stroke-width="1.1" stroke-linejoin="round"/><polygon points="2,8 7.6,4 7.6,12" fill="#f0f0f0" stroke="#1e1e1e" stroke-width="1.1" stroke-linejoin="round"/></svg>
<div class="w tog" style="left:686px;top:1001px;width:21px;height:20px;border-radius:0px 0px 0px 0px;line-height:19px;"></div>
<svg style="left:688px;top:1003px;" width="16" height="16" viewBox="0 0 16 16"><polygon points="1.8,8 13,1.8 13,14.2" fill="#f0f0f0" stroke="#1e1e1e" stroke-width="1.1" stroke-linejoin="round"/></svg>
<div class="w tog" style="left:706px;top:1001px;width:21px;height:20px;border-radius:0px 0px 0px 0px;line-height:19px;"></div>
<svg style="left:708px;top:1003px;" width="16" height="16" viewBox="0 0 16 16"><polygon points="14.2,8 3,1.8 3,14.2" fill="#f0f0f0" stroke="#1e1e1e" stroke-width="1.1" stroke-linejoin="round"/></svg>
<div class="w tog" style="left:726px;top:1001px;width:21px;height:20px;border-radius:0px 0px 0px 0px;line-height:19px;"></div>
<svg style="left:728px;top:1003px;" width="16" height="16" viewBox="0 0 16 16"><polygon points="8.4,8 2.8,4 2.8,12" fill="#f0f0f0" stroke="#1e1e1e" stroke-width="1.1" stroke-linejoin="round"/><polygon points="14,8 8.4,4 8.4,12" fill="#f0f0f0" stroke="#1e1e1e" stroke-width="1.1" stroke-linejoin="round"/></svg>
<div class="w tog" style="left:746px;top:1001px;width:20px;height:20px;border-radius:0px 4px 4px 0px;line-height:19px;"></div>
<svg style="left:748px;top:1003px;" width="16" height="16" viewBox="0 0 16 16"><polygon points="7.8,8 2.2,3.6 2.2,12.4" fill="#f0f0f0" stroke="#1e1e1e" stroke-width="1.1" stroke-linejoin="round"/><polygon points="12.6,8 7,3.6 7,12.4" fill="#f0f0f0" stroke="#1e1e1e" stroke-width="1.1" stroke-linejoin="round"/><rect x="12.6" y="3.4" width="2" height="9.2" fill="#e8e8e8" stroke="#1e1e1e" stroke-width="0.9"/></svg>
<div class="w menu" style="left:772px;top:1001px;width:115px;height:20px;border-radius:4px 4px 4px 4px;line-height:19px;"><span style="left:7px;">No Sync</span><svg style="left:0;top:0" width="115" height="20" viewBox="0 0 115 20"><polygon points="104,7.8 110,7.8 107,2.5999999999999996" fill="#b0b0b0"/><polygon points="104,10.8 110,10.8 107,16.0" fill="#b0b0b0"/></svg></div>
<div class="w tog" style="left:904px;top:1001px;width:19px;height:20px;border-radius:4px 4px 4px 4px;line-height:19px;"></div>
<svg style="left:905px;top:1003px;" width="16" height="16" viewBox="0 0 16 16"><circle cx="8" cy="8" r="4.6" fill="#e83a1a" stroke="#7a1a0a" stroke-width="1"/><circle cx="6.8" cy="6.6" r="1.6" fill="#ff8a6a" opacity="0.8"/></svg>
<div class="w menu" style="left:928px;top:1001px;width:32px;height:20px;border-radius:4px 4px 4px 4px;line-height:19px;"><svg style="left:0;top:0" width="32" height="20" viewBox="0 0 32 20"><polygon points="21,7.8 27,7.8 24,2.5999999999999996" fill="#b0b0b0"/><polygon points="21,10.8 27,10.8 24,16.0" fill="#b0b0b0"/></svg></div>
<svg style="left:931px;top:1003px;" width="16" height="16" viewBox="0 0 16 16"><path d="M8 3.2L12.8 8L8 12.8L3.2 8Z" fill="#fbb829" stroke="#3a2a08" stroke-width="0.9"/></svg>
<div class="w txt" style="left:966px;top:1001px;width:130px;height:20px;border-radius:4px 0px 0px 4px;line-height:19px;"></div>
<svg style="left:969px;top:1003px;" width="16" height="16" viewBox="0 0 16 16"><path d="M5.6 12L12.6 5.4L14.4 7.2M10.6 7.4L12.2 9" fill="none" stroke="#3a3a3a" stroke-width="2.6" stroke-linecap="round"/><path d="M5.6 12L12.6 5.4L14.4 7.2M10.6 7.4L12.2 9" fill="none" stroke="#f0f0f0" stroke-width="1.3" stroke-linecap="round"/><circle cx="5.2" cy="12.2" r="2.4" fill="#f0f0f0" stroke="#3a3a3a" stroke-width="1"/><path d="M3.6 10V1.6H6.2M3.6 4.4H5.6" fill="none" stroke="#5a4a10" stroke-width="2.6" stroke-linecap="round"/><path d="M3.6 10V1.6H6.2M3.6 4.4H5.6" fill="none" stroke="#f2e27a" stroke-width="1.3" stroke-linecap="round"/><circle cx="3.6" cy="11.4" r="2.3" fill="#f2e27a" stroke="#5a4a10" stroke-width="1"/><circle cx="3.6" cy="11.4" r="0.8" fill="#5a4a10"/></svg>
<div class="w tog" style="left:1095px;top:1001px;width:20px;height:20px;border-radius:0px 0px 0px 0px;line-height:19px;"></div>
<svg style="left:1097px;top:1003px;" width="16" height="16" viewBox="0 0 16 16"><path d="M5 11L14 2.4" fill="none" stroke="#3a3a3a" stroke-width="2.8" stroke-linecap="round"/><path d="M5 11L14 2.4" fill="none" stroke="#f0f0f0" stroke-width="1.4" stroke-linecap="round"/><circle cx="4.4" cy="11.4" r="2.6" fill="#f0f0f0" stroke="#3a3a3a" stroke-width="1"/><circle cx="4.4" cy="11.4" r="0.9" fill="#555"/></svg>
<div class="" style="left:0px;top:1021.5px;width:1280px;height:2.5px;background:#c4d7ee;"></div>
<div class="" style="left:122px;top:1022px;width:804px;height:2px;background:#fdfdfd;"></div>
<div class="" style="left:1112px;top:49px;width:168px;height:171px;background:#727272;"></div>
<div class="hdr" style="left:1112px;top:49px;width:168px;height:26px;"></div>
<div class="" style="left:1112px;top:75px;width:168px;height:1px;background:#8a8a8a;"></div>
<div class="" style="left:1112px;top:49px;width:168px;height:1px;background:#7c7c7c;"></div>
<div class="w menu" style="left:1120px;top:52px;width:32px;height:20px;border-radius:4px 4px 4px 4px;line-height:19px;"><svg style="left:0;top:0" width="32" height="20" viewBox="0 0 32 20"><polygon points="21,7.8 27,7.8 24,2.5999999999999996" fill="#b0b0b0"/><polygon points="21,10.8 27,10.8 24,16.0" fill="#b0b0b0"/></svg></div>
<svg style="left:1124px;top:54px;" width="16" height="16" viewBox="0 0 16 16"><path d="M3.5 4V12.5H8M3.5 8.5H8" fill="none" stroke="#1e1e1e" stroke-width="2.4"/><path d="M3.5 4V12.5H8M3.5 8.5H8" fill="none" stroke="#bdbdbd" stroke-width="1"/><rect x="1.2" y="1.2" width="6.4" height="3" fill="#f5b95a" stroke="#4a3208" stroke-width="0.8"/><rect x="8" y="7" width="6.4" height="2.8" fill="#f2f2f2" stroke="#1e1e1e" stroke-width="0.8"/><rect x="8" y="11.2" width="6.4" height="2.8" fill="#f2f2f2" stroke="#1e1e1e" stroke-width="0.8"/></svg>
<div class="t " style="left:1164px;top:57px;">View</div>
<div class="t " style="left:1209px;top:57px;">Search</div>
<div class="w radio" style="left:1256px;top:52px;width:30px;height:20px;border-radius:5px 0px 0px 5px;line-height:19px;"><span style="left:7px;">All</span></div>
<div style="left:1268px;top:49px;width:12px;height:12px;clip-path:polygon(0 0,100% 0,100% 100%);background:repeating-linear-gradient(225deg,#2e2e2e 0,#2e2e2e 1.41px,#b8b8b8 1.41px,#b8b8b8 2.83px);z-index:6;"></div>
<div class="" style="left:1112px;top:117px;width:168px;height:20px;background:#777777;"></div>
<div class="" style="left:1112px;top:157px;width:168px;height:20px;background:#777777;"></div>
<div class="" style="left:1112px;top:77px;width:109px;height:18px;background:#8a9096;"></div>
<div class="" style="left:1220px;top:77px;width:1px;height:122px;background:#686868;"></div>
<div class="" style="left:1240px;top:77px;width:1px;height:122px;background:#686868;"></div>
<div class="" style="left:1260px;top:77px;width:1px;height:122px;background:#686868;"></div>
<svg style="left:1112px;top:76px" width="168" height="124" viewBox="1112 76 168 124"><path d="M1126 87H1140 M1141.5 94V187 M1146 147H1156 M1146 167H1156 M1146 187H1156" stroke="#3c3c3c" stroke-width="1" fill="none"/><circle cx="1121.5" cy="86.5" r="4" fill="#ececec" stroke="#222" stroke-width="1.1"/><path d="M1119.5 86.5H1123.5" stroke="#222" stroke-width="1"/><circle cx="1141.5" cy="106.5" r="4" fill="#ececec" stroke="#222" stroke-width="1.1"/><path d="M1139.5 106.5H1143.5" stroke="#222" stroke-width="1"/><path d="M1141.5 104.5V108.5" stroke="#222" stroke-width="1"/><circle cx="1141.5" cy="146.5" r="4" fill="#ececec" stroke="#222" stroke-width="1.1"/><path d="M1139.5 146.5H1143.5" stroke="#222" stroke-width="1"/><path d="M1141.5 144.5V148.5" stroke="#222" stroke-width="1"/><circle cx="1141.5" cy="166.5" r="4" fill="#ececec" stroke="#222" stroke-width="1.1"/><path d="M1139.5 166.5H1143.5" stroke="#222" stroke-width="1"/><path d="M1141.5 164.5V168.5" stroke="#222" stroke-width="1"/><circle cx="1141.5" cy="186.5" r="4" fill="#ececec" stroke="#222" stroke-width="1.1"/><path d="M1139.5 186.5H1143.5" stroke="#222" stroke-width="1"/><path d="M1141.5 184.5V188.5" stroke="#222" stroke-width="1"/><path d="M1210.5 161V172 M1213.5 181V192" stroke="#4a4a4a" stroke-width="1.4"/></svg>
<div class="" style="left:1133px;top:79px;width:17px;height:17px;background:rgba(255,255,255,0.35);border-radius:9px;"></div>
<div class="" style="left:1153px;top:117px;width:18px;height:18px;background:rgba(200,200,230,0.45);border-radius:9px;"></div>
<div class="" style="left:1153px;top:157px;width:18px;height:18px;background:rgba(240,160,64,0.55);border-radius:9px;"></div>
<svg style="left:1134px;top:79px;" width="16" height="16" viewBox="0 0 16 16"><rect x="8.2" y="2.6" width="5.6" height="8.2" rx="2.2" fill="#2b4f94" stroke="#152648" stroke-width="0.8"/><rect x="9" y="3.4" width="2.4" height="6.6" rx="1.2" fill="#7aa2e0"/><circle cx="6" cy="10.6" r="3.4" fill="#d8d8d8" stroke="#2a2a2a" stroke-width="0.8"/><circle cx="5.2" cy="9.6" r="1.4" fill="#fff"/><circle cx="3" cy="3" r="2.6" fill="#e8e37a" opacity="0.55"/><circle cx="3" cy="3" r="1.3" fill="#fbf8a8"/></svg>
<svg style="left:1154px;top:98px;" width="16" height="16" viewBox="0 0 16 16"><rect x="4.4" y="4.6" width="9.8" height="9" fill="#e8dfc0" stroke="#3a3a2a" stroke-width="0.8" transform="rotate(8 9 9)"/><rect x="1.6" y="1.4" width="10" height="9.6" fill="#f6f6f6" stroke="#1e1e1e" stroke-width="0.9"/><rect x="6.8" y="2.6" width="2.8" height="4.6" rx="1.2" fill="#3a66b8" stroke="#152648" stroke-width="0.5"/><circle cx="5.8" cy="7.6" r="1.7" fill="#c8c8c8" stroke="#2a2a2a" stroke-width="0.6"/><circle cx="3.6" cy="3.4" r="1" fill="#f0e060"/></svg>
<svg style="left:1154px;top:118px;" width="16" height="16" viewBox="0 0 16 16"><circle cx="8" cy="8" r="6.6" fill="#4a86c8" stroke="#1e2a44" stroke-width="0.9"/><path d="M4 4.2C5.6 3 7.4 3.4 7.8 4.8C8 6 6.4 6.2 6.2 7.4C6 8.6 4.6 8.4 3.6 7.6C2.8 6.8 3 5 4 4.2Z" fill="#3a8a3a"/><path d="M9.4 7.6C10.8 6.8 12.8 7.4 12.8 9C12.8 10.6 11.4 12.6 10 12.4C8.8 12.2 9.4 10.8 8.8 9.8C8.4 9 8.6 8 9.4 7.6Z" fill="#3a8a3a"/><path d="M3.4 5.2A5.6 5.6 0 0 1 12 4" fill="none" stroke="#c8e0ff" stroke-width="1" opacity="0.7"/></svg>
<svg style="left:1154px;top:138px;" width="16" height="16" viewBox="0 0 16 16"><circle cx="4.8" cy="4.4" r="3" fill="#f2a24a" stroke="#5a3208" stroke-width="0.9"/><circle cx="10.8" cy="4" r="3.4" fill="#f2a24a" stroke="#5a3208" stroke-width="0.9"/><circle cx="4.8" cy="4.4" r="1" fill="#5a3208"/><circle cx="10.8" cy="4" r="1.2" fill="#5a3208"/><rect x="3.4" y="7.4" width="8.6" height="6" rx="0.8" fill="#f2a24a" stroke="#5a3208" stroke-width="0.9"/><path d="M12 9.2L15 8V13L12 11.8Z" fill="#f2a24a" stroke="#5a3208" stroke-width="0.9" stroke-linejoin="round"/><path d="M1 10.4H3.4" stroke="#5a3208" stroke-width="1.4"/></svg>
<svg style="left:1154px;top:158px;" width="16" height="16" viewBox="0 0 16 16"><path d="M2.6 3.2H13.4L8 13.6Z" fill="none" stroke="#5a3208" stroke-width="2.8" stroke-linejoin="round"/><path d="M2.6 3.2H13.4L8 13.6Z" fill="none" stroke="#f7c78a" stroke-width="1.4" stroke-linejoin="round"/><circle cx="2.6" cy="3.2" r="1.5" fill="#fff" stroke="#5a3208" stroke-width="0.6"/><circle cx="13.4" cy="3.2" r="1.5" fill="#fff" stroke="#5a3208" stroke-width="0.6"/><circle cx="8" cy="13.6" r="1.5" fill="#fff" stroke="#5a3208" stroke-width="0.6"/></svg>
<svg style="left:1154px;top:178px;" width="16" height="16" viewBox="0 0 16 16"><path d="M8 1.2A4.6 4.6 0 0 1 12.6 5.8C12.6 8 10.6 8.8 10.4 10.8H5.6C5.4 8.8 3.4 8 3.4 5.8A4.6 4.6 0 0 1 8 1.2Z" fill="#f7c78a" stroke="#5a3208" stroke-width="0.9"/><path d="M6.4 6L8 8.8L9.6 6" fill="none" stroke="#a05a10" stroke-width="0.9"/><rect x="5.8" y="10.8" width="4.4" height="3.2" fill="#e8e8e8" stroke="#5a3208" stroke-width="0.8"/><path d="M5.8 12.4H10.2" stroke="#5a3208" stroke-width="0.7"/><path d="M7 14.6H9" stroke="#5a3208" stroke-width="1.2"/></svg>
<div class="t " style="left:1154px;top:81px;">Scene</div>
<div class="t " style="left:1174px;top:101px;width:46px;overflow:hidden;">RenderLa</div>
<div class="t " style="left:1174px;top:121px;">World</div>
<div class="t " style="left:1174px;top:141px;">Camera</div>
<div class="t " style="color:#fff;left:1174px;top:161px;">Cube</div>
<div class="t " style="left:1174px;top:181px;">Lamp</div>
<svg style="left:1223px;top:138px;" width="16" height="16" viewBox="0 0 16 16"><path d="M1 8C3.4 4.2 12.6 4.2 15 8C12.6 11.8 3.4 11.8 1 8Z" fill="#f4f4f4" stroke="#2a2a2a" stroke-width="1"/><circle cx="8" cy="7.8" r="2.8" fill="#6a6a6a"/><circle cx="8" cy="7.8" r="1.4" fill="#1a1a1a"/><circle cx="7.2" cy="6.8" r="0.8" fill="#fff"/></svg>
<svg style="left:1243px;top:138px;" width="16" height="16" viewBox="0 0 16 16"><path d="M4 1.6V13L6.8 10.4L8.8 14.8L10.8 13.8L8.8 9.6H12.4Z" fill="#f4f4f4" stroke="#1e1e1e" stroke-width="1" stroke-linejoin="round"/></svg>
<svg style="left:1263px;top:138px;" width="16" height="16" viewBox="0 0 16 16"><rect x="1.2" y="4.4" width="13.6" height="9.6" rx="1.2" fill="#e4e4e4" stroke="#1e1e1e" stroke-width="1"/><rect x="3" y="2.6" width="4.4" height="2.4" fill="#d0d0d0" stroke="#1e1e1e" stroke-width="0.9"/><rect x="2" y="6.2" width="12" height="1.2" fill="#8a8a8a"/><circle cx="9" cy="9.6" r="3.5" fill="#3a3a3a" stroke="#111" stroke-width="0.8"/><circle cx="9" cy="9.6" r="2" fill="#7a2a2a"/><circle cx="8.2" cy="8.8" r="0.9" fill="#d08080"/><rect x="2.6" y="8" width="2" height="1.4" fill="#e02020"/></svg>
<svg style="left:1223px;top:158px;" width="16" height="16" viewBox="0 0 16 16"><path d="M1 8C3.4 4.2 12.6 4.2 15 8C12.6 11.8 3.4 11.8 1 8Z" fill="#f4f4f4" stroke="#2a2a2a" stroke-width="1"/><circle cx="8" cy="7.8" r="2.8" fill="#6a6a6a"/><circle cx="8" cy="7.8" r="1.4" fill="#1a1a1a"/><circle cx="7.2" cy="6.8" r="0.8" fill="#fff"/></svg>
<svg style="left:1243px;top:158px;" width="16" height="16" viewBox="0 0 16 16"><path d="M4 1.6V13L6.8 10.4L8.8 14.8L10.8 13.8L8.8 9.6H12.4Z" fill="#f4f4f4" stroke="#1e1e1e" stroke-width="1" stroke-linejoin="round"/></svg>
<svg style="left:1263px;top:158px;" width="16" height="16" viewBox="0 0 16 16"><rect x="1.2" y="4.4" width="13.6" height="9.6" rx="1.2" fill="#e4e4e4" stroke="#1e1e1e" stroke-width="1"/><rect x="3" y="2.6" width="4.4" height="2.4" fill="#d0d0d0" stroke="#1e1e1e" stroke-width="0.9"/><rect x="2" y="6.2" width="12" height="1.2" fill="#8a8a8a"/><circle cx="9" cy="9.6" r="3.5" fill="#3a3a3a" stroke="#111" stroke-width="0.8"/><circle cx="9" cy="9.6" r="2" fill="#7a2a2a"/><circle cx="8.2" cy="8.8" r="0.9" fill="#d08080"/><rect x="2.6" y="8" width="2" height="1.4" fill="#e02020"/></svg>
<svg style="left:1223px;top:178px;" width="16" height="16" viewBox="0 0 16 16"><path d="M1 8C3.4 4.2 12.6 4.2 15 8C12.6 11.8 3.4 11.8 1 8Z" fill="#f4f4f4" stroke="#2a2a2a" stroke-width="1"/><circle cx="8" cy="7.8" r="2.8" fill="#6a6a6a"/><circle cx="8" cy="7.8" r="1.4" fill="#1a1a1a"/><circle cx="7.2" cy="6.8" r="0.8" fill="#fff"/></svg>
<svg style="left:1243px;top:178px;" width="16" height="16" viewBox="0 0 16 16"><path d="M4 1.6V13L6.8 10.4L8.8 14.8L10.8 13.8L8.8 9.6H12.4Z" fill="#f4f4f4" stroke="#1e1e1e" stroke-width="1" stroke-linejoin="round"/></svg>
<svg style="left:1263px;top:178px;" width="16" height="16" viewBox="0 0 16 16"><rect x="1.2" y="4.4" width="13.6" height="9.6" rx="1.2" fill="#e4e4e4" stroke="#1e1e1e" stroke-width="1"/><rect x="3" y="2.6" width="4.4" height="2.4" fill="#d0d0d0" stroke="#1e1e1e" stroke-width="0.9"/><rect x="2" y="6.2" width="12" height="1.2" fill="#8a8a8a"/><circle cx="9" cy="9.6" r="3.5" fill="#3a3a3a" stroke="#111" stroke-width="0.8"/><circle cx="9" cy="9.6" r="2" fill="#7a2a2a"/><circle cx="8.2" cy="8.8" r="0.9" fill="#d08080"/><rect x="2.6" y="8" width="2" height="1.4" fill="#e02020"/></svg>
<div class="" style="left:1115px;top:201px;width:160px;height:13px;background:#5a5a5a;border-radius:6.5px;"></div>
<div class="" style="left:1115px;top:201px;width:90px;height:13px;background:linear-gradient(#8a8a8a,#7a7a7a);border:1px solid #4a4a4a;border-radius:6.5px;"></div>
<div style="left:1111px;top:206px;width:12px;height:12px;clip-path:polygon(0 0,100% 100%,0 100%);background:repeating-linear-gradient(45deg,#a8a8a8 0,#a8a8a8 1.41px,#262626 1.41px,#262626 2.83px);z-index:6;"></div>
<div class="" style="left:1111px;top:218px;width:169px;height:1px;background:#0c0c0c;"></div>
<div class="" style="left:1112px;top:219px;width:168px;height:803px;background:#727272;"></div>
<div class="hdr" style="left:1112px;top:219px;width:168px;height:25px;"></div>
<div class="" style="left:1112px;top:219px;width:168px;height:1px;background:#7c7c7c;"></div>
<div class="" style="left:1112px;top:244px;width:168px;height:1px;background:#828282;"></div>
<div class="w menu" style="left:1120px;top:222px;width:32px;height:20px;border-radius:4px 4px 4px 4px;line-height:19px;"><svg style="left:0;top:0" width="32" height="20" viewBox="0 0 32 20"><polygon points="21,7.8 27,7.8 24,2.5999999999999996" fill="#b0b0b0"/><polygon points="21,10.8 27,10.8 24,16.0" fill="#b0b0b0"/></svg></div>
<svg style="left:1124px;top:224px;" width="16" height="16" viewBox="0 0 16 16"><rect x="1.2" y="2.4" width="13.6" height="4.6" rx="1.2" fill="#f2f2f2" stroke="#1e1e1e" stroke-width="0.9"/><rect x="2.2" y="3.6" width="5" height="2.2" fill="#7a7a7a"/><rect x="1.2" y="9" width="13.6" height="4.6" rx="1.2" fill="#f2f2f2" stroke="#1e1e1e" stroke-width="0.9"/><path d="M3 11.3H13" stroke="#333" stroke-width="1.2"/><path d="M4.6 9.9L3 11.3L4.6 12.7M11.4 9.9L13 11.3L11.4 12.7" stroke="#333" stroke-width="1" fill="none"/></svg>
<div class="w radios" style="left:1160px;top:222px;width:21px;height:20px;border-radius:4px 0px 0px 4px;line-height:19px;"></div>
<svg style="left:1162px;top:224px;" width="16" height="16" viewBox="0 0 16 16"><rect x="1.2" y="4.4" width="13.6" height="9.6" rx="1.2" fill="#e4e4e4" stroke="#1e1e1e" stroke-width="1"/><rect x="3" y="2.6" width="4.4" height="2.4" fill="#d0d0d0" stroke="#1e1e1e" stroke-width="0.9"/><rect x="2" y="6.2" width="12" height="1.2" fill="#8a8a8a"/><circle cx="9" cy="9.6" r="3.5" fill="#3a3a3a" stroke="#111" stroke-width="0.8"/><circle cx="9" cy="9.6" r="2" fill="#7a2a2a"/><circle cx="8.2" cy="8.8" r="0.9" fill="#d08080"/><rect x="2.6" y="8" width="2" height="1.4" fill="#e02020"/></svg>
<div class="w radio" style="left:1180px;top:222px;width:21px;height:20px;border-radius:0px 0px 0px 0px;line-height:19px;"></div>
<svg style="left:1182px;top:224px;opacity:0.72;" width="16" height="16" viewBox="0 0 16 16"><rect x="4.4" y="4.6" width="9.8" height="9" fill="#e8dfc0" stroke="#3a3a2a" stroke-width="0.8" transform="rotate(8 9 9)"/><rect x="1.6" y="1.4" width="10" height="9.6" fill="#f6f6f6" stroke="#1e1e1e" stroke-width="0.9"/><rect x="6.8" y="2.6" width="2.8" height="4.6" rx="1.2" fill="#3a66b8" stroke="#152648" stroke-width="0.5"/><circle cx="5.8" cy="7.6" r="1.7" fill="#c8c8c8" stroke="#2a2a2a" stroke-width="0.6"/><circle cx="3.6" cy="3.4" r="1" fill="#f0e060"/></svg>
<div class="w radio" style="left:1200px;top:222px;width:21px;height:20px;border-radius:0px 0px 0px 0px;line-height:19px;"></div>
<svg style="left:1202px;top:224px;opacity:0.72;" width="16" height="16" viewBox="0 0 16 16"><rect x="8.2" y="2.6" width="5.6" height="8.2" rx="2.2" fill="#2b4f94" stroke="#152648" stroke-width="0.8"/><rect x="9" y="3.4" width="2.4" height="6.6" rx="1.2" fill="#7aa2e0"/><circle cx="6" cy="10.6" r="3.4" fill="#d8d8d8" stroke="#2a2a2a" stroke-width="0.8"/><circle cx="5.2" cy="9.6" r="1.4" fill="#fff"/><circle cx="3" cy="3" r="2.6" fill="#e8e37a" opacity="0.55"/><circle cx="3" cy="3" r="1.3" fill="#fbf8a8"/></svg>
<div class="w radio" style="left:1220px;top:222px;width:21px;height:20px;border-radius:0px 0px 0px 0px;line-height:19px;"></div>
<svg style="left:1222px;top:224px;opacity:0.72;" width="16" height="16" viewBox="0 0 16 16"><circle cx="8" cy="8" r="6.6" fill="#4a86c8" stroke="#1e2a44" stroke-width="0.9"/><path d="M4 4.2C5.6 3 7.4 3.4 7.8 4.8C8 6 6.4 6.2 6.2 7.4C6 8.6 4.6 8.4 3.6 7.6C2.8 6.8 3 5 4 4.2Z" fill="#3a8a3a"/><path d="M9.4 7.6C10.8 6.8 12.8 7.4 12.8 9C12.8 10.6 11.4 12.6 10 12.4C8.8 12.2 9.4 10.8 8.8 9.8C8.4 9 8.6 8 9.4 7.6Z" fill="#3a8a3a"/><path d="M3.4 5.2A5.6 5.6 0 0 1 12 4" fill="none" stroke="#c8e0ff" stroke-width="1" opacity="0.7"/></svg>
<div class="w radio" style="left:1240px;top:222px;width:21px;height:20px;border-radius:0px 0px 0px 0px;line-height:19px;"></div>
<svg style="left:1242px;top:224px;opacity:0.72;" width="16" height="16" viewBox="0 0 16 16"><path d="M1.5 4L8 1.6L14.5 4V11.6L8 14.6L1.5 11.6Z" fill="#6b3c0c"/><path d="M2.5 4.4L8 2.5L13.5 4.4L8 6.4Z" fill="#e8c89a"/><path d="M2.4 5.4L7.5 7.2V13.4L2.4 11Z" fill="#d69a5a"/><path d="M8.5 7.2L13.6 5.4V11L8.5 13.4Z" fill="#a8703a"/></svg>
<div class="w radio" style="left:1260px;top:222px;width:21px;height:20px;border-radius:0px 0px 0px 0px;line-height:19px;"></div>
<svg style="left:1262px;top:224px;opacity:0.72;" width="16" height="16" viewBox="0 0 16 16"><rect x="1.4" y="7" width="8" height="5" rx="2.4" fill="none" stroke="#4a4a4a" stroke-width="3" transform="rotate(-40 5.4 9.5)"/><rect x="1.4" y="7" width="8" height="5" rx="2.4" fill="none" stroke="#b8b8b8" stroke-width="1.5" transform="rotate(-40 5.4 9.5)"/><rect x="7" y="3.4" width="8" height="5" rx="2.4" fill="none" stroke="#4a4a4a" stroke-width="3" transform="rotate(-40 11 5.9)"/><rect x="7" y="3.4" width="8" height="5" rx="2.4" fill="none" stroke="#b8b8b8" stroke-width="1.5" transform="rotate(-40 11 5.9)"/></svg>
<div style="left:1268px;top:220px;width:12px;height:12px;clip-path:polygon(0 0,100% 0,100% 100%);background:repeating-linear-gradient(225deg,#2e2e2e 0,#2e2e2e 1.41px,#b8b8b8 1.41px,#b8b8b8 2.83px);z-index:6;"></div>
<svg style="left:1121px;top:255px;" width="16" height="16" viewBox="0 0 16 16"><path d="M1.4 14.6L6.4 9.6" stroke="#2a2a2a" stroke-width="2.2" stroke-linecap="round"/><path d="M1.6 14.4L6.4 9.6" stroke="#d8d8d8" stroke-width="1" stroke-linecap="round"/><path d="M4 7.4L8.6 12L10 10.6L9.4 9L12.6 5.8L13.8 6L14.8 5L11 1.2L10 2.2L10.2 3.4L7 6.6L5.4 6Z" fill="#e8e8e8" stroke="#2a2a2a" stroke-width="0.9" stroke-linejoin="round"/></svg>
<svg style="left:1142px;top:255px;" width="16" height="16" viewBox="0 0 16 16"><rect x="8.2" y="2.6" width="5.6" height="8.2" rx="2.2" fill="#2b4f94" stroke="#152648" stroke-width="0.8"/><rect x="9" y="3.4" width="2.4" height="6.6" rx="1.2" fill="#7aa2e0"/><circle cx="6" cy="10.6" r="3.4" fill="#d8d8d8" stroke="#2a2a2a" stroke-width="0.8"/><circle cx="5.2" cy="9.6" r="1.4" fill="#fff"/><circle cx="3" cy="3" r="2.6" fill="#e8e37a" opacity="0.55"/><circle cx="3" cy="3" r="1.3" fill="#fbf8a8"/></svg>
<div class="t " style="left:1162px;top:258px;">Scene</div>
<div class="" style="left:1116px;top:280px;width:159px;height:1px;background:#525252;"></div>
<div class="" style="left:1116px;top:281px;width:159px;height:1px;background:#818181;"></div>
<svg style="left:1124px;top:288px" width="10" height="10" viewBox="0 0 10 10"><polygon points="0,1 9,1 4.5,9.5" fill="#2a2a2a"/></svg>
<div class="t sh" style="font-size:12px;left:1136px;top:286px;">Render</div>
<svg style="left:1259px;top:292px" width="12" height="6" viewBox="0 0 12 6" shape-rendering="crispEdges"><rect x="0" y="0" width="1" height="1" fill="#d2d2d2"/><rect x="0" y="1" width="1" height="1" fill="#222222"/><rect x="0" y="3" width="1" height="1" fill="#d2d2d2"/><rect x="0" y="4" width="1" height="1" fill="#222222"/><rect x="3" y="0" width="1" height="1" fill="#d2d2d2"/><rect x="3" y="1" width="1" height="1" fill="#222222"/><rect x="3" y="3" width="1" height="1" fill="#d2d2d2"/><rect x="3" y="4" width="1" height="1" fill="#222222"/><rect x="6" y="0" width="1" height="1" fill="#d2d2d2"/><rect x="6" y="1" width="1" height="1" fill="#222222"/><rect x="6" y="3" width="1" height="1" fill="#d2d2d2"/><rect x="6" y="4" width="1" height="1" fill="#222222"/><rect x="9" y="0" width="1" height="1" fill="#d2d2d2"/><rect x="9" y="1" width="1" height="1" fill="#222222"/><rect x="9" y="3" width="1" height="1" fill="#d2d2d2"/><rect x="9" y="4" width="1" height="1" fill="#222222"/></svg>
<div class="w btn" style="left:1119px;top:313px;width:51px;height:20px;border-radius:4px 0px 0px 4px;line-height:19px;"><span style="left:18px;">Rende</span></div>
<svg style="left:1122px;top:315px;" width="16" height="16" viewBox="0 0 16 16"><rect x="1.2" y="4.4" width="13.6" height="9.6" rx="1.2" fill="#e4e4e4" stroke="#1e1e1e" stroke-width="1"/><rect x="3" y="2.6" width="4.4" height="2.4" fill="#d0d0d0" stroke="#1e1e1e" stroke-width="0.9"/><rect x="2" y="6.2" width="12" height="1.2" fill="#8a8a8a"/><circle cx="9" cy="9.6" r="3.5" fill="#3a3a3a" stroke="#111" stroke-width="0.8"/><circle cx="9" cy="9.6" r="2" fill="#7a2a2a"/><circle cx="8.2" cy="8.8" r="0.9" fill="#d08080"/><rect x="2.6" y="8" width="2" height="1.4" fill="#e02020"/><path d="M12.6 0.4L13.5 2.7L15.8 3.4L13.5 4.3L12.6 6.6L11.7 4.3L9.4 3.4L11.7 2.7Z" fill="#ffe23a" stroke="#fff8c0" stroke-width="0.4"/></svg>
<div class="w btn" style="left:1169px;top:313px;width:52px;height:20px;border-radius:0px 0px 0px 0px;line-height:19px;"><span style="left:18px;">Anima</span></div>
<svg style="left:1173px;top:315px;" width="16" height="16" viewBox="0 0 16 16"><rect x="2" y="6.6" width="12.4" height="8" fill="#3a3a3a" stroke="#161616" stroke-width="0.9"/><rect x="3" y="9.4" width="10.4" height="1.1" fill="#aaa"/><rect x="3" y="11.8" width="10.4" height="1.1" fill="#888"/><path d="M1.4 5.8L13.6 1.4L14.4 3.6L2.2 8Z" fill="#f4f4f4" stroke="#161616" stroke-width="0.9" stroke-linejoin="round"/><path d="M4.2 4.8L5.6 6.6M7.4 3.6L8.8 5.4M10.6 2.5L12 4.3" stroke="#161616" stroke-width="1.4"/><path d="M1.6 6.2L2.4 8.6L0.6 9.2Z" fill="#5aa0f0"/></svg>
<div class="w btn" style="left:1220px;top:313px;width:52px;height:20px;border-radius:0px 4px 4px 0px;line-height:19px;"><span style="left:18px;">Audio</span></div>
<svg style="left:1223px;top:315px;" width="16" height="16" viewBox="0 0 16 16"><path d="M1.4 5.6H4L7.4 2.4V13.6L4 10.4H1.4Z" fill="#f2f2f2" stroke="#2a2a2a" stroke-width="0.9" stroke-linejoin="round"/><path d="M9.4 4.6C11 6.4 11 9.6 9.4 11.4" fill="none" stroke="#8ab0e8" stroke-width="1.6"/><path d="M11.6 2.6C14.4 5.4 14.4 10.6 11.6 13.4" fill="none" stroke="#8ab0e8" stroke-width="1.6"/></svg>
<div class="t " style="left:1126px;top:343px;">Display:</div>
<div class="w menu" style="left:1174px;top:338px;width:78px;height:20px;border-radius:4px 0px 0px 4px;line-height:19px;"><span style="left:8px;">Image Edi...</span><svg style="left:0;top:0" width="78" height="20" viewBox="0 0 78 20"><polygon points="68,7.8 74,7.8 71,2.5999999999999996" fill="#b0b0b0"/><polygon points="68,10.8 74,10.8 71,16.0" fill="#b0b0b0"/></svg></div>
<div class="w tog" style="left:1251px;top:338px;width:21px;height:20px;border-radius:0px 4px 4px 0px;line-height:19px;"></div>
<svg style="left:1254px;top:340px;" width="16" height="16" viewBox="0 0 16 16"><path d="M2.2 6.4V4.6A2.8 2.8 0 0 1 7.8 4.6V8.6" fill="none" stroke="#2a2a2a" stroke-width="2.6"/><path d="M2.2 6.4V4.6A2.8 2.8 0 0 1 7.8 4.6V8.6" fill="none" stroke="#f0f0f0" stroke-width="1.2"/><rect x="5" y="8" width="9.6" height="6.6" rx="0.8" fill="#f0f0f0" stroke="#2a2a2a" stroke-width="1"/><rect x="6.2" y="10.6" width="7.2" height="1.4" fill="#9a9a9a"/></svg>
<div class="" style="left:1116px;top:365px;width:159px;height:1px;background:#525252;"></div>
<div class="" style="left:1116px;top:366px;width:159px;height:1px;background:#818181;"></div>
<svg style="left:1124px;top:373px" width="10" height="10" viewBox="0 0 10 10"><polygon points="0,1 9,1 4.5,9.5" fill="#2a2a2a"/></svg>
<div class="t sh" style="font-size:12px;left:1136px;top:371px;">Dimensions</div>
<svg style="left:1259px;top:377px" width="12" height="6" viewBox="0 0 12 6" shape-rendering="crispEdges"><rect x="0" y="0" width="1" height="1" fill="#d2d2d2"/><rect x="0" y="1" width="1" height="1" fill="#222222"/><rect x="0" y="3" width="1" height="1" fill="#d2d2d2"/><rect x="0" y="4" width="1" height="1" fill="#222222"/><rect x="3" y="0" width="1" height="1" fill="#d2d2d2"/><rect x="3" y="1" width="1" height="1" fill="#222222"/><rect x="3" y="3" width="1" height="1" fill="#d2d2d2"/><rect x="3" y="4" width="1" height="1" fill="#222222"/><rect x="6" y="0" width="1" height="1" fill="#d2d2d2"/><rect x="6" y="1" width="1" height="1" fill="#222222"/><rect x="6" y="3" width="1" height="1" fill="#d2d2d2"/><rect x="6" y="4" width="1" height="1" fill="#222222"/><rect x="9" y="0" width="1" height="1" fill="#d2d2d2"/><rect x="9" y="1" width="1" height="1" fill="#222222"/><rect x="9" y="3" width="1" height="1" fill="#d2d2d2"/><rect x="9" y="4" width="1" height="1" fill="#222222"/></svg>
<div class="w menu" style="left:1119px;top:398px;width:113px;height:20px;border-radius:4px 0px 0px 4px;line-height:19px;"><span style="left:7px;">Render Presets</span><svg style="left:0;top:0" width="113" height="20" viewBox="0 0 113 20"><polygon points="102,7.8 108,7.8 105,2.5999999999999996" fill="#b0b0b0"/><polygon points="102,10.8 108,10.8 105,16.0" fill="#b0b0b0"/></svg></div>
<div class="w tog" style="left:1231px;top:398px;width:21px;height:20px;border-radius:0px 0px 0px 0px;line-height:19px;"></div>
<svg style="left:1233px;top:400px;" width="16" height="16" viewBox="0 0 16 16"><path d="M8 3.2V12.8M3.2 8H12.8" stroke="#1e1e1e" stroke-width="3.4" stroke-linecap="round"/><path d="M8 3.4V12.6M3.4 8H12.6" stroke="#f2f2f2" stroke-width="1.7" stroke-linecap="round"/></svg>
<div class="w tog" style="left:1251px;top:398px;width:21px;height:20px;border-radius:0px 4px 4px 0px;line-height:19px;"></div>
<svg style="left:1253px;top:400px;" width="16" height="16" viewBox="0 0 16 16"><path d="M3.2 8H12.8" stroke="#1e1e1e" stroke-width="3.4" stroke-linecap="round"/><path d="M3.4 8H12.6" stroke="#f2f2f2" stroke-width="1.7" stroke-linecap="round"/></svg>
<div class="t " style="left:1126px;top:428px;">Resolution:</div>
<div class="t " style="left:1207px;top:428px;">Frame Ran...</div>
<div class="w num" style="left:1119px;top:443px;width:72px;height:20px;border-radius:9px 9px 0px 0px;line-height:19px;"><span style="left:0;right:0;text-align:center;left:-2px;">1920 px</span><svg style="left:0;top:0" width="72" height="20" viewBox="0 0 72 20"><polygon points="8,5.7 8,12.3 3.8,9.0" fill="#777777"/><polygon points="62,5.7 62,12.3 66.2,9.0" fill="#777777"/></svg></div>
<div class="w num" style="left:1119px;top:462px;width:72px;height:21px;border-radius:0px 0px 0px 0px;line-height:19px;"><span style="left:0;right:0;text-align:center;left:-2px;">1080 px</span><svg style="left:0;top:0" width="72" height="21" viewBox="0 0 72 21"><polygon points="8,6.2 8,12.8 3.8,9.5" fill="#777777"/><polygon points="62,6.2 62,12.8 66.2,9.5" fill="#777777"/></svg></div>
<div class="w num" style="left:1119px;top:482px;width:72px;height:21px;border-radius:0px 0px 9px 9px;line-height:19px;background:linear-gradient(90deg,#808080 0,#808080 38px,transparent 38px),linear-gradient(#a0a0a0,#b6b6b6);"><span style="left:0;right:0;text-align:center;left:18px;">50%</span></div>
<div class="w num" style="left:1199px;top:443px;width:73px;height:20px;border-radius:9px 9px 0px 0px;line-height:19px;"><span style="left:0;right:0;text-align:center;">Start : 1</span><svg style="left:0;top:0" width="73" height="20" viewBox="0 0 73 20"><polygon points="8,5.7 8,12.3 3.8,9.0" fill="#777777"/><polygon points="63,5.7 63,12.3 67.2,9.0" fill="#777777"/></svg></div>
<div class="w num" style="left:1199px;top:462px;width:73px;height:21px;border-radius:0px 0px 0px 0px;line-height:19px;"><span style="left:0;right:0;text-align:center;">En:&nbsp; 250</span><svg style="left:0;top:0" width="73" height="21" viewBox="0 0 73 21"><polygon points="8,6.2 8,12.8 3.8,9.5" fill="#777777"/><polygon points="63,6.2 63,12.8 67.2,9.5" fill="#777777"/></svg></div>
<div class="w num" style="left:1199px;top:482px;width:73px;height:21px;border-radius:0px 0px 9px 9px;line-height:19px;"><span style="left:0;right:0;text-align:center;">Fram: 1</span><svg style="left:0;top:0" width="73" height="21" viewBox="0 0 73 21"><polygon points="8,6.2 8,12.8 3.8,9.5" fill="#777777"/><polygon points="63,6.2 63,12.8 67.2,9.5" fill="#777777"/></svg></div>
<div class="t " style="left:1126px;top:508px;">Aspect Ratio:</div>
<div class="t " style="left:1207px;top:508px;">Frame Rate:</div>
<div class="w num" style="left:1119px;top:523px;width:72px;height:20px;border-radius:9px 9px 0px 0px;line-height:19px;"><span style="left:0;right:0;text-align:center;">:&nbsp; 1.000</span><svg style="left:0;top:0" width="72" height="20" viewBox="0 0 72 20"><polygon points="8,5.7 8,12.3 3.8,9.0" fill="#777777"/><polygon points="62,5.7 62,12.3 66.2,9.0" fill="#777777"/></svg></div>
<div class="w num" style="left:1119px;top:542px;width:72px;height:21px;border-radius:0px 0px 9px 9px;line-height:19px;"><span style="left:0;right:0;text-align:center;">Y:1.000</span><svg style="left:0;top:0" width="72" height="21" viewBox="0 0 72 21"><polygon points="8,6.2 8,12.8 3.8,9.5" fill="#777777"/><polygon points="62,6.2 62,12.8 66.2,9.5" fill="#777777"/></svg></div>
<div class="w menu" style="left:1199px;top:524px;width:73px;height:19px;border-radius:4px 4px 4px 4px;line-height:19px;"><span style="left:7px;">24 fps</span><svg style="left:0;top:0" width="73" height="19" viewBox="0 0 73 19"><polygon points="62,7.3 68,7.3 65,2.0999999999999996" fill="#b0b0b0"/><polygon points="62,10.3 68,10.3 65,15.5" fill="#b0b0b0"/></svg></div>
<div class="t " style="left:1207px;top:548px;">Time Rema</div>
<div class="chk" style="left:1122px;top:568px;overflow:visible"></div>
<div class="chkd" style="left:1162px;top:568px;overflow:visible"></div>
<div class="w num" style="left:1199px;top:563px;width:36px;height:20px;border-radius:9px 0px 0px 9px;line-height:19px;"><span style="left:0;right:0;text-align:center;">1</span><svg style="left:0;top:0" width="36" height="20" viewBox="0 0 36 20"><polygon points="8,5.7 8,12.3 3.8,9.0" fill="#777777"/><polygon points="26,5.7 26,12.3 30.2,9.0" fill="#777777"/></svg></div>
<div class="w num" style="left:1234px;top:563px;width:38px;height:20px;border-radius:0px 9px 9px 0px;line-height:19px;"><span style="left:0;right:0;text-align:center;">1</span><svg style="left:0;top:0" width="38" height="20" viewBox="0 0 38 20"><polygon points="8,5.7 8,12.3 3.8,9.0" fill="#777777"/><polygon points="28,5.7 28,12.3 32.2,9.0" fill="#777777"/></svg></div>
<div class="" style="left:1116px;top:591px;width:159px;height:1px;background:#525252;"></div>
<div class="" style="left:1116px;top:592px;width:159px;height:1px;background:#818181;"></div>
<svg style="left:1124px;top:600px" width="10" height="10" viewBox="0 0 10 10"><polygon points="0,1 9,1 4.5,9.5" fill="#2a2a2a"/></svg>
<div class="chk" style="left:1136px;top:598px;overflow:visible"><svg style="left:-1px;top:-4px" width="16" height="16" viewBox="0 0 16 16"><path d="M3.2 8.2 L6.2 11.6 L12.6 2.4" fill="none" stroke="#f0f0f0" stroke-width="2.1" stroke-linecap="round" stroke-linejoin="round"/></svg></div>
<div class="t sh" style="font-size:12px;left:1156px;top:598px;">Anti-Aliasing</div>
<svg style="left:1259px;top:604px" width="12" height="6" viewBox="0 0 12 6" shape-rendering="crispEdges"><rect x="0" y="0" width="1" height="1" fill="#d2d2d2"/><rect x="0" y="1" width="1" height="1" fill="#222222"/><rect x="0" y="3" width="1" height="1" fill="#d2d2d2"/><rect x="0" y="4" width="1" height="1" fill="#222222"/><rect x="3" y="0" width="1" height="1" fill="#d2d2d2"/><rect x="3" y="1" width="1" height="1" fill="#222222"/><rect x="3" y="3" width="1" height="1" fill="#d2d2d2"/><rect x="3" y="4" width="1" height="1" fill="#222222"/><rect x="6" y="0" width="1" height="1" fill="#d2d2d2"/><rect x="6" y="1" width="1" height="1" fill="#222222"/><rect x="6" y="3" width="1" height="1" fill="#d2d2d2"/><rect x="6" y="4" width="1" height="1" fill="#222222"/><rect x="9" y="0" width="1" height="1" fill="#d2d2d2"/><rect x="9" y="1" width="1" height="1" fill="#222222"/><rect x="9" y="3" width="1" height="1" fill="#d2d2d2"/><rect x="9" y="4" width="1" height="1" fill="#222222"/></svg>
<div class="w radio" style="left:1119px;top:625px;width:18px;height:20px;border-radius:4px 0px 0px 4px;line-height:19px;"><span style="left:0;right:0;text-align:center;">5</span></div>
<div class="w radios" style="left:1136px;top:625px;width:19px;height:20px;border-radius:0px 0px 0px 0px;line-height:19px;"><span style="left:0;right:0;text-align:center;">8</span></div>
<div class="w radio" style="left:1154px;top:625px;width:19px;height:20px;border-radius:0px 0px 0px 0px;line-height:19px;"><span style="left:0;right:0;text-align:center;">11</span></div>
<div class="w radio" style="left:1172px;top:625px;width:19px;height:20px;border-radius:0px 4px 4px 0px;line-height:19px;"><span style="left:0;right:0;text-align:center;">16</span></div>
<div class="w menu" style="left:1199px;top:625px;width:73px;height:20px;border-radius:4px 4px 4px 4px;line-height:19px;"><span style="left:7px;">Mitchell-...</span><svg style="left:0;top:0" width="73" height="20" viewBox="0 0 73 20"><polygon points="63,7.8 69,7.8 66,2.5999999999999996" fill="#b0b0b0"/><polygon points="63,10.8 69,10.8 66,16.0" fill="#b0b0b0"/></svg></div>
<div class="chk" style="left:1122px;top:651px;overflow:visible"></div>
<div class="t " style="left:1143px;top:652px;">Full Sam</div>
<div class="w num" style="left:1199px;top:648px;width:73px;height:19px;border-radius:9px 9px 9px 9px;line-height:19px;"><span style="left:0;right:0;text-align:center;">1.000 p</span><svg style="left:0;top:0" width="73" height="19" viewBox="0 0 73 19"><polygon points="8,5.2 8,11.8 3.8,8.5" fill="#777777"/><polygon points="63,5.2 63,11.8 67.2,8.5" fill="#777777"/></svg></div>
<div class="" style="left:1116px;top:674px;width:159px;height:1px;background:#525252;"></div>
<div class="" style="left:1116px;top:675px;width:159px;height:1px;background:#818181;"></div>
<svg style="left:1124px;top:682px" width="10" height="10" viewBox="0 0 10 10"><polygon points="0.5,0.5 0.5,9.5 9,5" fill="#2a2a2a"/></svg>
<div class="chk" style="left:1136px;top:680px;overflow:visible"></div>
<div class="t sh" style="font-size:12px;left:1156px;top:680px;">Sampled Motion Blur</div>
<svg style="left:1259px;top:686px" width="12" height="6" viewBox="0 0 12 6" shape-rendering="crispEdges"><rect x="0" y="0" width="1" height="1" fill="#d2d2d2"/><rect x="0" y="1" width="1" height="1" fill="#222222"/><rect x="0" y="3" width="1" height="1" fill="#d2d2d2"/><rect x="0" y="4" width="1" height="1" fill="#222222"/><rect x="3" y="0" width="1" height="1" fill="#d2d2d2"/><rect x="3" y="1" width="1" height="1" fill="#222222"/><rect x="3" y="3" width="1" height="1" fill="#d2d2d2"/><rect x="3" y="4" width="1" height="1" fill="#222222"/><rect x="6" y="0" width="1" height="1" fill="#d2d2d2"/><rect x="6" y="1" width="1" height="1" fill="#222222"/><rect x="6" y="3" width="1" height="1" fill="#d2d2d2"/><rect x="6" y="4" width="1" height="1" fill="#222222"/><rect x="9" y="0" width="1" height="1" fill="#d2d2d2"/><rect x="9" y="1" width="1" height="1" fill="#222222"/><rect x="9" y="3" width="1" height="1" fill="#d2d2d2"/><rect x="9" y="4" width="1" height="1" fill="#222222"/></svg>
<div class="" style="left:1116px;top:698px;width:159px;height:1px;background:#525252;"></div>
<div class="" style="left:1116px;top:699px;width:159px;height:1px;background:#818181;"></div>
<svg style="left:1124px;top:706px" width="10" height="10" viewBox="0 0 10 10"><polygon points="0.5,0.5 0.5,9.5 9,5" fill="#2a2a2a"/></svg>
<div class="t sh" style="font-size:12px;left:1136px;top:704px;">Shading</div>
<svg style="left:1259px;top:710px" width="12" height="6" viewBox="0 0 12 6" shape-rendering="crispEdges"><rect x="0" y="0" width="1" height="1" fill="#d2d2d2"/><rect x="0" y="1" width="1" height="1" fill="#222222"/><rect x="0" y="3" width="1" height="1" fill="#d2d2d2"/><rect x="0" y="4" width="1" height="1" fill="#222222"/><rect x="3" y="0" width="1" height="1" fill="#d2d2d2"/><rect x="3" y="1" width="1" height="1" fill="#222222"/><rect x="3" y="3" width="1" height="1" fill="#d2d2d2"/><rect x="3" y="4" width="1" height="1" fill="#222222"/><rect x="6" y="0" width="1" height="1" fill="#d2d2d2"/><rect x="6" y="1" width="1" height="1" fill="#222222"/><rect x="6" y="3" width="1" height="1" fill="#d2d2d2"/><rect x="6" y="4" width="1" height="1" fill="#222222"/><rect x="9" y="0" width="1" height="1" fill="#d2d2d2"/><rect x="9" y="1" width="1" height="1" fill="#222222"/><rect x="9" y="3" width="1" height="1" fill="#d2d2d2"/><rect x="9" y="4" width="1" height="1" fill="#222222"/></svg>
<div class="" style="left:1116px;top:722px;width:159px;height:1px;background:#525252;"></div>
<div class="" style="left:1116px;top:723px;width:159px;height:1px;background:#818181;"></div>
<svg style="left:1124px;top:730px" width="10" height="10" viewBox="0 0 10 10"><polygon points="0.5,0.5 0.5,9.5 9,5" fill="#2a2a2a"/></svg>
<div class="t sh" style="font-size:12px;left:1136px;top:728px;">Performance</div>
<svg style="left:1259px;top:734px" width="12" height="6" viewBox="0 0 12 6" shape-rendering="crispEdges"><rect x="0" y="0" width="1" height="1" fill="#d2d2d2"/><rect x="0" y="1" width="1" height="1" fill="#222222"/><rect x="0" y="3" width="1" height="1" fill="#d2d2d2"/><rect x="0" y="4" width="1" height="1" fill="#222222"/><rect x="3" y="0" width="1" height="1" fill="#d2d2d2"/><rect x="3" y="1" width="1" height="1" fill="#222222"/><rect x="3" y="3" width="1" height="1" fill="#d2d2d2"/><rect x="3" y="4" width="1" height="1" fill="#222222"/><rect x="6" y="0" width="1" height="1" fill="#d2d2d2"/><rect x="6" y="1" width="1" height="1" fill="#222222"/><rect x="6" y="3" width="1" height="1" fill="#d2d2d2"/><rect x="6" y="4" width="1" height="1" fill="#222222"/><rect x="9" y="0" width="1" height="1" fill="#d2d2d2"/><rect x="9" y="1" width="1" height="1" fill="#222222"/><rect x="9" y="3" width="1" height="1" fill="#d2d2d2"/><rect x="9" y="4" width="1" height="1" fill="#222222"/></svg>
<div class="" style="left:1116px;top:746px;width:159px;height:1px;background:#525252;"></div>
<div class="" style="left:1116px;top:747px;width:159px;height:1px;background:#818181;"></div>
<svg style="left:1124px;top:754px" width="10" height="10" viewBox="0 0 10 10"><polygon points="0.5,0.5 0.5,9.5 9,5" fill="#2a2a2a"/></svg>
<div class="t sh" style="font-size:12px;left:1136px;top:752px;">Post Processing</div>
<svg style="left:1259px;top:758px" width="12" height="6" viewBox="0 0 12 6" shape-rendering="crispEdges"><rect x="0" y="0" width="1" height="1" fill="#d2d2d2"/><rect x="0" y="1" width="1" height="1" fill="#222222"/><rect x="0" y="3" width="1" height="1" fill="#d2d2d2"/><rect x="0" y="4" width="1" height="1" fill="#222222"/><rect x="3" y="0" width="1" height="1" fill="#d2d2d2"/><rect x="3" y="1" width="1" height="1" fill="#222222"/><rect x="3" y="3" width="1" height="1" fill="#d2d2d2"/><rect x="3" y="4" width="1" height="1" fill="#222222"/><rect x="6" y="0" width="1" height="1" fill="#d2d2d2"/><rect x="6" y="1" width="1" height="1" fill="#222222"/><rect x="6" y="3" width="1" height="1" fill="#d2d2d2"/><rect x="6" y="4" width="1" height="1" fill="#222222"/><rect x="9" y="0" width="1" height="1" fill="#d2d2d2"/><rect x="9" y="1" width="1" height="1" fill="#222222"/><rect x="9" y="3" width="1" height="1" fill="#d2d2d2"/><rect x="9" y="4" width="1" height="1" fill="#222222"/></svg>
<div class="" style="left:1116px;top:770px;width:159px;height:1px;background:#525252;"></div>
<div class="" style="left:1116px;top:771px;width:159px;height:1px;background:#818181;"></div>
<svg style="left:1124px;top:778px" width="10" height="10" viewBox="0 0 10 10"><polygon points="0.5,0.5 0.5,9.5 9,5" fill="#2a2a2a"/></svg>
<div class="t sh" style="font-size:12px;left:1136px;top:776px;">Metadata</div>
<svg style="left:1259px;top:782px" width="12" height="6" viewBox="0 0 12 6" shape-rendering="crispEdges"><rect x="0" y="0" width="1" height="1" fill="#d2d2d2"/><rect x="0" y="1" width="1" height="1" fill="#222222"/><rect x="0" y="3" width="1" height="1" fill="#d2d2d2"/><rect x="0" y="4" width="1" height="1" fill="#222222"/><rect x="3" y="0" width="1" height="1" fill="#d2d2d2"/><rect x="3" y="1" width="1" height="1" fill="#222222"/><rect x="3" y="3" width="1" height="1" fill="#d2d2d2"/><rect x="3" y="4" width="1" height="1" fill="#222222"/><rect x="6" y="0" width="1" height="1" fill="#d2d2d2"/><rect x="6" y="1" width="1" height="1" fill="#222222"/><rect x="6" y="3" width="1" height="1" fill="#d2d2d2"/><rect x="6" y="4" width="1" height="1" fill="#222222"/><rect x="9" y="0" width="1" height="1" fill="#d2d2d2"/><rect x="9" y="1" width="1" height="1" fill="#222222"/><rect x="9" y="3" width="1" height="1" fill="#d2d2d2"/><rect x="9" y="4" width="1" height="1" fill="#222222"/></svg>
<div class="" style="left:1116px;top:794px;width:159px;height:1px;background:#525252;"></div>
<div class="" style="left:1116px;top:795px;width:159px;height:1px;background:#818181;"></div>
<svg style="left:1124px;top:802px" width="10" height="10" viewBox="0 0 10 10"><polygon points="0,1 9,1 4.5,9.5" fill="#2a2a2a"/></svg>
<div class="t sh" style="font-size:12px;left:1136px;top:800px;">Output</div>
<svg style="left:1259px;top:806px" width="12" height="6" viewBox="0 0 12 6" shape-rendering="crispEdges"><rect x="0" y="0" width="1" height="1" fill="#d2d2d2"/><rect x="0" y="1" width="1" height="1" fill="#222222"/><rect x="0" y="3" width="1" height="1" fill="#d2d2d2"/><rect x="0" y="4" width="1" height="1" fill="#222222"/><rect x="3" y="0" width="1" height="1" fill="#d2d2d2"/><rect x="3" y="1" width="1" height="1" fill="#222222"/><rect x="3" y="3" width="1" height="1" fill="#d2d2d2"/><rect x="3" y="4" width="1" height="1" fill="#222222"/><rect x="6" y="0" width="1" height="1" fill="#d2d2d2"/><rect x="6" y="1" width="1" height="1" fill="#222222"/><rect x="6" y="3" width="1" height="1" fill="#d2d2d2"/><rect x="6" y="4" width="1" height="1" fill="#222222"/><rect x="9" y="0" width="1" height="1" fill="#d2d2d2"/><rect x="9" y="1" width="1" height="1" fill="#222222"/><rect x="9" y="3" width="1" height="1" fill="#d2d2d2"/><rect x="9" y="4" width="1" height="1" fill="#222222"/></svg>
<div class="w txt" style="left:1119px;top:827px;width:133px;height:20px;border-radius:4px 0px 0px 4px;line-height:19px;"><span style="left:6px;">/tmp\</span></div>
<div class="w tog" style="left:1251px;top:827px;width:21px;height:20px;border-radius:0px 4px 4px 0px;line-height:19px;"></div>
<svg style="left:1253px;top:829px;" width="16" height="16" viewBox="0 0 16 16"><rect x="6.4" y="1.4" width="6.6" height="6" fill="#f4f4f4" stroke="#3a3a3a" stroke-width="0.8"/><path d="M7.8 3.2H11.6M7.8 4.8H11.6" stroke="#888" stroke-width="0.8"/><path d="M1.2 4.4H5.6L6.8 6H14.4V13.8H1.2Z" fill="#f0dc8a" stroke="#5a4a10" stroke-width="0.9" stroke-linejoin="round"/><path d="M1.2 13.8L3.2 7.8H15.4L14.4 13.8Z" fill="#f7eeb0" stroke="#5a4a10" stroke-width="0.9" stroke-linejoin="round"/></svg>
<div class="chk" style="left:1122px;top:855px;overflow:visible"><svg style="left:-1px;top:-4px" width="16" height="16" viewBox="0 0 16 16"><path d="M3.2 8.2 L6.2 11.6 L12.6 2.4" fill="none" stroke="#f0f0f0" stroke-width="2.1" stroke-linecap="round" stroke-linejoin="round"/></svg></div>
<div class="t " style="color:#fff;left:1143px;top:857px;">Overwrit</div>
<div class="chk" style="left:1202px;top:855px;overflow:visible"><svg style="left:-1px;top:-4px" width="16" height="16" viewBox="0 0 16 16"><path d="M3.2 8.2 L6.2 11.6 L12.6 2.4" fill="none" stroke="#f0f0f0" stroke-width="2.1" stroke-linecap="round" stroke-linejoin="round"/></svg></div>
<div class="t " style="color:#fff;left:1224px;top:857px;">File Exte</div>
<div class="chk" style="left:1122px;top:877px;overflow:visible"></div>
<div class="t " style="left:1143px;top:879px;">Placehol</div>
<div class="chk" style="left:1202px;top:877px;overflow:visible"></div>
<div class="t " style="left:1224px;top:879px;">Cache R</div>
<div class="w menu" style="left:1119px;top:899px;width:72px;height:20px;border-radius:4px 4px 4px 4px;line-height:19px;"><span style="left:22px;">PNG</span><svg style="left:0;top:0" width="72" height="20" viewBox="0 0 72 20"><polygon points="62,7.8 68,7.8 65,2.5999999999999996" fill="#b0b0b0"/><polygon points="62,10.8 68,10.8 65,16.0" fill="#b0b0b0"/></svg></div>
<svg style="left:1122px;top:901px;" width="16" height="16" viewBox="0 0 16 16"><path d="M2.4 1.2H10.4L13.6 4.4V14.8H2.4Z" fill="#f6f6f6" stroke="#2a2a2a" stroke-width="0.9" stroke-linejoin="round"/><path d="M10.4 1.2V4.4H13.6" fill="#d0d0d0" stroke="#2a2a2a" stroke-width="0.7"/><rect x="3.6" y="5.4" width="8.8" height="4.2" fill="#e8a0a0"/><rect x="3.6" y="9.6" width="8.8" height="4" fill="#6a6ab0"/><path d="M3.6 9.6H12.4" stroke="#3a2a5a" stroke-width="0.9"/><circle cx="9.6" cy="7.2" r="1.1" fill="#fbe8e0"/></svg>
<div class="w radio" style="left:1199px;top:899px;width:24px;height:20px;border-radius:4px 0px 0px 4px;line-height:19px;"><span style="left:0;right:0;text-align:center;">BW</span></div>
<div class="w radio" style="left:1222px;top:899px;width:25px;height:20px;border-radius:0px 0px 0px 0px;line-height:19px;"><span style="left:0;right:0;text-align:center;">RGB</span></div>
<div class="w radios" style="left:1246px;top:899px;width:26px;height:20px;border-radius:0px 4px 4px 0px;line-height:19px;"><span style="left:2px;">RGB</span></div>
<div class="t " style="left:1126px;top:926px;">Color D</div>
<div class="w radios" style="left:1175px;top:921px;width:48px;height:20px;border-radius:4px 0px 0px 4px;line-height:19px;"><span style="left:0;right:0;text-align:center;">8</span></div>
<div class="w radio" style="left:1222px;top:921px;width:50px;height:20px;border-radius:0px 4px 4px 0px;line-height:19px;"><span style="left:0;right:0;text-align:center;">16</span></div>
<div class="w num" style="left:1119px;top:943px;width:153px;height:20px;border-radius:10px 10px 10px 10px;line-height:19px;background:linear-gradient(90deg,#808080 0,#808080 29px,transparent 29px),linear-gradient(#a0a0a0,#b6b6b6);"><span style="left:13px;">Compression:</span><span style="right:15px">15%</span></div>
<div class="" style="left:1116px;top:972px;width:159px;height:1px;background:#525252;"></div>
<div class="" style="left:1116px;top:973px;width:159px;height:1px;background:#818181;"></div>
<svg style="left:1124px;top:980px" width="10" height="10" viewBox="0 0 10 10"><polygon points="0.5,0.5 0.5,9.5 9,5" fill="#2a2a2a"/></svg>
<div class="t sh" style="font-size:12px;left:1136px;top:978px;">Bake</div>
<svg style="left:1259px;top:984px" width="12" height="6" viewBox="0 0 12 6" shape-rendering="crispEdges"><rect x="0" y="0" width="1" height="1" fill="#d2d2d2"/><rect x="0" y="1" width="1" height="1" fill="#222222"/><rect x="0" y="3" width="1" height="1" fill="#d2d2d2"/><rect x="0" y="4" width="1" height="1" fill="#222222"/><rect x="3" y="0" width="1" height="1" fill="#d2d2d2"/><rect x="3" y="1" width="1" height="1" fill="#222222"/><rect x="3" y="3" width="1" height="1" fill="#d2d2d2"/><rect x="3" y="4" width="1" height="1" fill="#222222"/><rect x="6" y="0" width="1" height="1" fill="#d2d2d2"/><rect x="6" y="1" width="1" height="1" fill="#222222"/><rect x="6" y="3" width="1" height="1" fill="#d2d2d2"/><rect x="6" y="4" width="1" height="1" fill="#222222"/><rect x="9" y="0" width="1" height="1" fill="#d2d2d2"/><rect x="9" y="1" width="1" height="1" fill="#222222"/><rect x="9" y="3" width="1" height="1" fill="#d2d2d2"/><rect x="9" y="4" width="1" height="1" fill="#222222"/></svg>
<div class="" style="left:1116px;top:996px;width:159px;height:1px;background:#525252;"></div>
<div class="" style="left:1116px;top:997px;width:159px;height:1px;background:#818181;"></div>
<svg style="left:1124px;top:1005px" width="10" height="10" viewBox="0 0 10 10"><polygon points="0.5,0.5 0.5,9.5 9,5" fill="#2a2a2a"/></svg>
<div class="chk" style="left:1136px;top:1003px;overflow:visible"></div>
<div class="t sh" style="font-size:12px;left:1156px;top:1003px;">Freestyle</div>
<svg style="left:1259px;top:1009px" width="12" height="6" viewBox="0 0 12 6" shape-rendering="crispEdges"><rect x="0" y="0" width="1" height="1" fill="#d2d2d2"/><rect x="0" y="1" width="1" height="1" fill="#222222"/><rect x="0" y="3" width="1" height="1" fill="#d2d2d2"/><rect x="0" y="4" width="1" height="1" fill="#222222"/><rect x="3" y="0" width="1" height="1" fill="#d2d2d2"/><rect x="3" y="1" width="1" height="1" fill="#222222"/><rect x="3" y="3" width="1" height="1" fill="#d2d2d2"/><rect x="3" y="4" width="1" height="1" fill="#222222"/><rect x="6" y="0" width="1" height="1" fill="#d2d2d2"/><rect x="6" y="1" width="1" height="1" fill="#222222"/><rect x="6" y="3" width="1" height="1" fill="#d2d2d2"/><rect x="6" y="4" width="1" height="1" fill="#222222"/><rect x="9" y="0" width="1" height="1" fill="#d2d2d2"/><rect x="9" y="1" width="1" height="1" fill="#222222"/><rect x="9" y="3" width="1" height="1" fill="#d2d2d2"/><rect x="9" y="4" width="1" height="1" fill="#222222"/></svg>
<div style="left:1111px;top:1010px;width:12px;height:12px;clip-path:polygon(0 0,100% 100%,0 100%);background:repeating-linear-gradient(45deg,#a8a8a8 0,#a8a8a8 1.41px,#262626 1.41px,#262626 2.83px);z-index:6;"></div>
<div class="" style="left:1279px;top:49px;width:1px;height:973px;background:#666666;z-index:4;"></div>
<div class="" style="left:0px;top:0px;width:1280px;height:22px;background:linear-gradient(#9ebadb,#c4d8ef);"></div>
<div class="" style="left:0px;top:0px;width:1280px;height:1px;background:#2b2b2b;"></div>
<svg style="left:2px;top:2px;" width="16" height="16" viewBox="0 0 16 16"><path d="M0.9 10.9 L7.6 5.9 L4 5.9 C2.8 5.9 2.8 4.2 4 4.2 L8 4.2 L6.6 3 C5.7 2.2 6.8 1 7.7 1.8 L13.9 6.6 C16.6 9.2 15.2 14.2 10.4 14.6 C7 14.8 4.9 12.7 4.7 10.7 L2 12.6 C0.8 13.3 -0.1 11.7 0.9 10.9Z" fill="#f5821f"/><ellipse cx="10" cy="9.6" rx="3.4" ry="3.2" fill="#fff"/><ellipse cx="10.1" cy="9.6" rx="1.9" ry="1.8" fill="#0d4a9a"/></svg>
<div class="t" style="left:26px;top:4px;font-family:'Liberation Sans',sans-serif;font-size:12px;letter-spacing:-0.2px;color:#000;">Blender</div>
<div class="" style="left:1181px;top:2px;width:30px;height:17px;background:linear-gradient(#c9dbef 0%,#bdd2ea 48%,#a2bedd 52%,#b9d0ea 100%);border:1px solid #6f85a8;border-radius:3px;box-shadow:inset 0 0 0 1px rgba(255,255,255,0.55);"></div>
<div class="" style="left:1214px;top:2px;width:30px;height:17px;background:linear-gradient(#c9dbef 0%,#bdd2ea 48%,#a2bedd 52%,#b9d0ea 100%);border:1px solid #6f85a8;border-radius:3px;box-shadow:inset 0 0 0 1px rgba(255,255,255,0.55);"></div>
<div class="" style="left:1247px;top:2px;width:31px;height:17px;background:linear-gradient(#e8a597 0%,#d98471 48%,#c2452a 52%,#cf6a4f 100%);border:1px solid #5e1a24;border-radius:3px;box-shadow:inset 0 0 0 1px rgba(255,255,255,0.55);"></div>
<svg style="left:1181px;top:2px" width="97" height="17" viewBox="0 0 97 17"><rect x="10.5" y="9" width="9.5" height="3.2" rx="0.8" fill="#f4f4f4" stroke="#53596a" stroke-width="0.9"/><rect x="46.5" y="4" width="9" height="7" rx="1" fill="#f4f4f4" stroke="#53596a" stroke-width="0.9"/><rect x="49" y="6.5" width="4" height="2.4" fill="#a9c2e0" stroke="#53596a" stroke-width="0.6"/><rect x="42.5" y="7" width="9" height="7" rx="1" fill="#f4f4f4" stroke="#53596a" stroke-width="0.9"/><rect x="45" y="9.5" width="4" height="2.4" fill="#a9c2e0" stroke="#53596a" stroke-width="0.6"/><path d="M78.4 5.4 L84.8 11.4 M84.8 5.4 L78.4 11.4" stroke="#55525e" stroke-width="3.8" stroke-linecap="square"/><path d="M78.4 5.4 L84.8 11.4 M84.8 5.4 L78.4 11.4" stroke="#f6f6f6" stroke-width="2.3" stroke-linecap="square"/></svg>
<div class="hdr" style="left:0px;top:22px;width:1280px;height:26px;"></div>
<div class="" style="left:0px;top:48px;width:1280px;height:1px;background:#0c0c0c;"></div>
<div style="left:0px;top:36px;width:12px;height:12px;clip-path:polygon(0 0,100% 100%,0 100%);background:repeating-linear-gradient(45deg,#a8a8a8 0,#a8a8a8 1.41px,#262626 1.41px,#262626 2.83px);z-index:6;"></div>
<div style="left:1268px;top:22px;width:12px;height:12px;clip-path:polygon(0 0,100% 0,100% 100%);background:repeating-linear-gradient(225deg,#2e2e2e 0,#2e2e2e 1.41px,#b8b8b8 1.41px,#b8b8b8 2.83px);z-index:6;"></div>
<div class="w menu" style="left:8px;top:26px;width:32px;height:20px;border-radius:4px 4px 4px 4px;line-height:19px;"><svg style="left:0;top:0" width="32" height="20" viewBox="0 0 32 20"><polygon points="21,7.8 27,7.8 24,2.5999999999999996" fill="#b0b0b0"/><polygon points="21,10.8 27,10.8 24,16.0" fill="#b0b0b0"/></svg></div>
<svg style="left:13px;top:28px;" width="16" height="16" viewBox="0 0 16 16"><circle cx="8" cy="8" r="7" fill="#1d2a44"/><circle cx="8" cy="8" r="6" fill="#3f66a8"/><path d="M2.6 9.4 A5.6 5.6 0 0 0 13.4 9.4 A9 9 0 0 1 2.6 9.4Z" fill="#86a6d6" opacity="0.8"/><circle cx="8" cy="4.6" r="1.25" fill="#fff"/><path d="M6.3 6.8H9.1V11H10V12.1H6.2V11H7.1V7.9H6.3Z" fill="#fff"/></svg>
<div class="t " style="left:52px;top:31px;">File</div>
<div class="t " style="left:90px;top:31px;">Render</div>
<div class="t " style="left:145px;top:31px;">Window</div>
<div class="t " style="left:205px;top:31px;">Help</div>
<div class="w menu" style="left:241px;top:26px;width:33px;height:20px;border-radius:4px 0px 0px 4px;line-height:19px;"><svg style="left:0;top:0" width="33" height="20" viewBox="0 0 33 20"><polygon points="22,7.8 28,7.8 25,2.5999999999999996" fill="#b0b0b0"/><polygon points="22,10.8 28,10.8 25,16.0" fill="#b0b0b0"/></svg></div>
<svg style="left:245px;top:28px;" width="16" height="16" viewBox="0 0 16 16"><rect x="1.2" y="1.4" width="13.6" height="13.4" rx="1" fill="#2a2a2a"/><rect x="2.3" y="2.5" width="5" height="5.6" fill="#f4f4f4"/><rect x="2.3" y="9.2" width="5" height="4.5" fill="#e6e6e6"/><rect x="8.4" y="2.5" width="5.3" height="11.2" fill="#f4f4f4"/><rect x="9.2" y="11.6" width="3.6" height="1.2" fill="#777"/><rect x="3" y="11.8" width="3.4" height="1" fill="#777"/></svg>
<div class="w txt" style="left:273px;top:26px;width:120px;height:20px;border-radius:0px 0px 0px 0px;line-height:19px;"><span style="left:7px;">Default</span></div>
<div class="w btn" style="left:392px;top:26px;width:21px;height:20px;border-radius:0px 0px 0px 0px;line-height:19px;"></div>
<div class="w btn" style="left:412px;top:26px;width:21px;height:20px;border-radius:0px 4px 4px 0px;line-height:19px;"></div>
<svg style="left:394px;top:28px;" width="16" height="16" viewBox="0 0 16 16"><path d="M8 3.2V12.8M3.2 8H12.8" stroke="#1e1e1e" stroke-width="3.4" stroke-linecap="round"/><path d="M8 3.4V12.6M3.4 8H12.6" stroke="#f2f2f2" stroke-width="1.7" stroke-linecap="round"/></svg>
<svg style="left:414px;top:28px;" width="16" height="16" viewBox="0 0 16 16"><path d="M4.4 4.4L11.6 11.6M11.6 4.4L4.4 11.6" stroke="#1e1e1e" stroke-width="3.4" stroke-linecap="round"/><path d="M4.5 4.5L11.5 11.5M11.5 4.5L4.5 11.5" stroke="#f2f2f2" stroke-width="1.7" stroke-linecap="round"/></svg>
<div class="w menu" style="left:438px;top:26px;width:33px;height:20px;border-radius:4px 0px 0px 4px;line-height:19px;"><svg style="left:0;top:0" width="33" height="20" viewBox="0 0 33 20"><polygon points="22,7.8 28,7.8 25,2.5999999999999996" fill="#b0b0b0"/><polygon points="22,10.8 28,10.8 25,16.0" fill="#b0b0b0"/></svg></div>
<svg style="left:442px;top:28px;" width="16" height="16" viewBox="0 0 16 16"><rect x="8.2" y="2.6" width="5.6" height="8.2" rx="2.2" fill="#2b4f94" stroke="#152648" stroke-width="0.8"/><rect x="9" y="3.4" width="2.4" height="6.6" rx="1.2" fill="#7aa2e0"/><circle cx="6" cy="10.6" r="3.4" fill="#d8d8d8" stroke="#2a2a2a" stroke-width="0.8"/><circle cx="5.2" cy="9.6" r="1.4" fill="#fff"/><circle cx="3" cy="3" r="2.6" fill="#e8e37a" opacity="0.55"/><circle cx="3" cy="3" r="1.3" fill="#fbf8a8"/></svg>
<div class="w txt" style="left:470px;top:26px;width:120px;height:20px;border-radius:0px 0px 0px 0px;line-height:19px;"><span style="left:7px;">Scene</span></div>
<div class="w btn" style="left:589px;top:26px;width:21px;height:20px;border-radius:0px 0px 0px 0px;line-height:19px;"></div>
<div class="w btn" style="left:609px;top:26px;width:21px;height:20px;border-radius:0px 4px 4px 0px;line-height:19px;"></div>
<svg style="left:591px;top:28px;" width="16" height="16" viewBox="0 0 16 16"><path d="M8 3.2V12.8M3.2 8H12.8" stroke="#1e1e1e" stroke-width="3.4" stroke-linecap="round"/><path d="M8 3.4V12.6M3.4 8H12.6" stroke="#f2f2f2" stroke-width="1.7" stroke-linecap="round"/></svg>
<svg style="left:611px;top:28px;" width="16" height="16" viewBox="0 0 16 16"><path d="M4.4 4.4L11.6 11.6M11.6 4.4L4.4 11.6" stroke="#1e1e1e" stroke-width="3.4" stroke-linecap="round"/><path d="M4.5 4.5L11.5 11.5M11.5 4.5L4.5 11.5" stroke="#f2f2f2" stroke-width="1.7" stroke-linecap="round"/></svg>
<div class="w menu" style="left:646px;top:26px;width:111px;height:20px;border-radius:4px 4px 4px 4px;line-height:19px;"><span style="left:8px;">Blender Render</span><svg style="left:0;top:0" width="111" height="20" viewBox="0 0 111 20"><polygon points="99,7.8 105,7.8 102,2.5999999999999996" fill="#b0b0b0"/><polygon points="99,10.8 105,10.8 102,16.0" fill="#b0b0b0"/></svg></div>
<svg style="left:775px;top:28px;" width="16" height="16" viewBox="0 0 16 16"><path d="M0.9 10.9 L7.6 5.9 L4 5.9 C2.8 5.9 2.8 4.2 4 4.2 L8 4.2 L6.6 3 C5.7 2.2 6.8 1 7.7 1.8 L13.9 6.6 C16.6 9.2 15.2 14.2 10.4 14.6 C7 14.8 4.9 12.7 4.7 10.7 L2 12.6 C0.8 13.3 -0.1 11.7 0.9 10.9Z" fill="#f5821f"/><ellipse cx="10" cy="9.6" rx="3.4" ry="3.2" fill="#fff"/><ellipse cx="10.1" cy="9.6" rx="1.9" ry="1.8" fill="#0d4a9a"/></svg>
<div class="t " style="left:801px;top:31px;">v2.79 | Verts:8 | Faces:6 | Tris:12 | Objects:1/3 | Lamps:0/1 | Mem:8.27M | Cube</div>
</div>
</body></html>
